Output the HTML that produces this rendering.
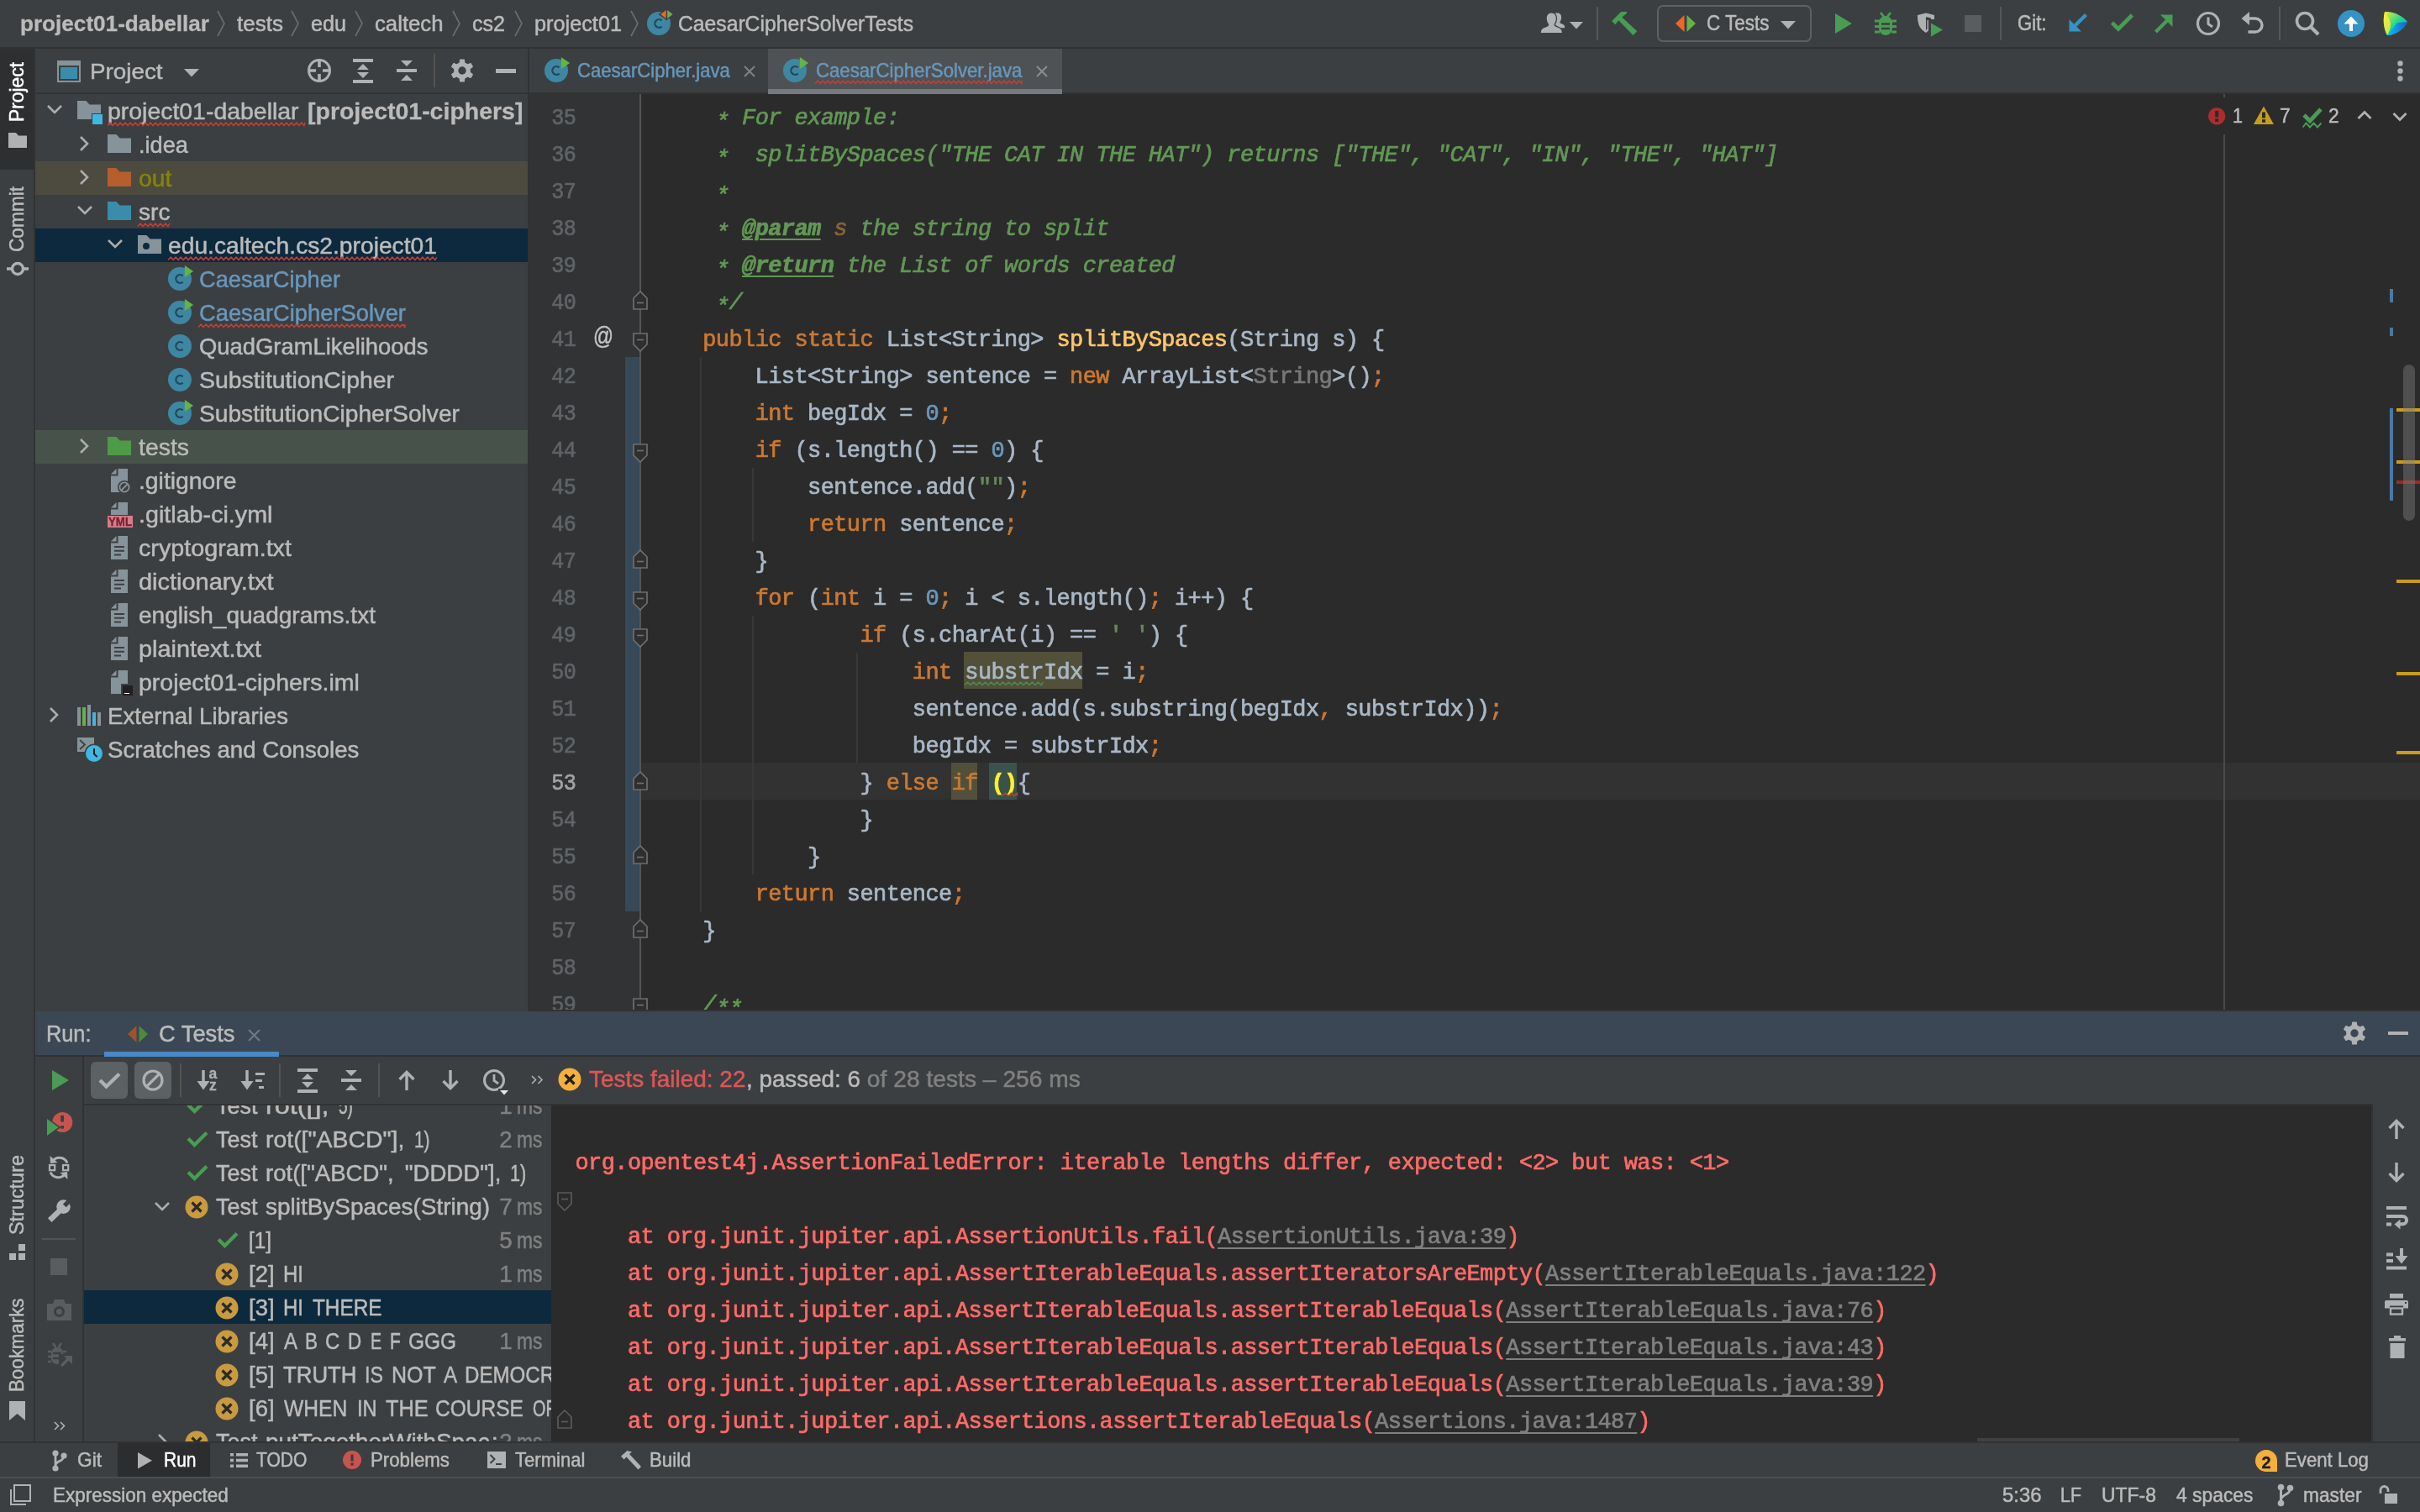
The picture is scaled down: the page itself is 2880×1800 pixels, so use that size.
<!DOCTYPE html>
<html><head><meta charset="utf-8"><title>IDE</title>
<style>html,body{margin:0;padding:0}body{transform:translateZ(0);will-change:transform;width:2880px;height:1800px;position:relative;overflow:hidden;background:#3c3f41;font-family:"Liberation Sans",sans-serif}svg{overflow:visible;display:block}</style></head>
<body>
<div style="position:absolute;left:0px;top:0px;width:2880px;height:56px;background:#3c3f41;"></div>
<div style="position:absolute;left:0px;top:56px;width:2880px;height:2px;background:#323232;"></div>
<div style="position:absolute;top:16.11px;font-family:'Liberation Sans',sans-serif;font-size:25.5px;line-height:25.5px;color:#bbbbbb;white-space:pre;left:24.00px;font-weight:bold;-webkit-text-stroke:0.3px;transform:scaleX(1.0243);transform-origin:0 0;">project01-dabellar</div>
<svg style="position:absolute;left:257px;top:12px;" width="12" height="32" viewBox="0 0 12 32"><polyline points="2,1 10,16 2,31" fill="none" stroke="#6b6e70" stroke-width="1.6"/></svg>
<div style="position:absolute;top:16.11px;font-family:'Liberation Sans',sans-serif;font-size:25.5px;line-height:25.5px;color:#bbbbbb;white-space:pre;left:282.00px;-webkit-text-stroke:0.5px;transform:scaleX(1.0213);transform-origin:0 0;">tests</div>
<svg style="position:absolute;left:345px;top:12px;" width="12" height="32" viewBox="0 0 12 32"><polyline points="2,1 10,16 2,31" fill="none" stroke="#6b6e70" stroke-width="1.6"/></svg>
<div style="position:absolute;top:16.11px;font-family:'Liberation Sans',sans-serif;font-size:25.5px;line-height:25.5px;color:#bbbbbb;white-space:pre;left:370.00px;-webkit-text-stroke:0.5px;transform:scaleX(0.9871);transform-origin:0 0;">edu</div>
<svg style="position:absolute;left:421px;top:12px;" width="12" height="32" viewBox="0 0 12 32"><polyline points="2,1 10,16 2,31" fill="none" stroke="#6b6e70" stroke-width="1.6"/></svg>
<div style="position:absolute;top:16.11px;font-family:'Liberation Sans',sans-serif;font-size:25.5px;line-height:25.5px;color:#bbbbbb;white-space:pre;left:446.00px;-webkit-text-stroke:0.5px;transform:scaleX(1.0087);transform-origin:0 0;">caltech</div>
<svg style="position:absolute;left:537px;top:12px;" width="12" height="32" viewBox="0 0 12 32"><polyline points="2,1 10,16 2,31" fill="none" stroke="#6b6e70" stroke-width="1.6"/></svg>
<div style="position:absolute;top:16.11px;font-family:'Liberation Sans',sans-serif;font-size:25.5px;line-height:25.5px;color:#bbbbbb;white-space:pre;left:562.00px;-webkit-text-stroke:0.5px;transform:scaleX(0.9828);transform-origin:0 0;">cs2</div>
<svg style="position:absolute;left:611px;top:12px;" width="12" height="32" viewBox="0 0 12 32"><polyline points="2,1 10,16 2,31" fill="none" stroke="#6b6e70" stroke-width="1.6"/></svg>
<div style="position:absolute;top:16.11px;font-family:'Liberation Sans',sans-serif;font-size:25.5px;line-height:25.5px;color:#bbbbbb;white-space:pre;left:636.00px;-webkit-text-stroke:0.5px;transform:scaleX(0.9914);transform-origin:0 0;">project01</div>
<svg style="position:absolute;left:749px;top:12px;" width="12" height="32" viewBox="0 0 12 32"><polyline points="2,1 10,16 2,31" fill="none" stroke="#6b6e70" stroke-width="1.6"/></svg>
<svg style="position:absolute;left:766px;top:8px;" width="38" height="38" viewBox="-2 -4 38 38"><circle cx="16" cy="16" r="14" fill="#3e87a3"/><path d="M19.6,12.4 A4.9,4.9 0 1 0 19.6,19.6" fill="none" stroke="#23475b" stroke-width="2.3"/><path d="M26,-2.500 V12.500 L15.500,5 Z" fill="#3c3f41"/><path d="M24.500,-2.500 V12.500 L35,5 Z" fill="#3c3f41"/><path d="M24.600,0 V10 L18.200,5 Z" fill="#f26522"/><path d="M26.200,0 V10 L32.600,5 Z" fill="#62b543"/></svg>
<div style="position:absolute;top:16.11px;font-family:'Liberation Sans',sans-serif;font-size:25.5px;line-height:25.5px;color:#bbbbbb;white-space:pre;left:806.50px;-webkit-text-stroke:0.5px;transform:scaleX(0.9684);transform-origin:0 0;">CaesarCipherSolverTests</div>
<svg style="position:absolute;left:1833px;top:15px;" width="30" height="25" viewBox="0 0 30 25"><path d="M20.500,0.600 C24,0.600 25.300,3.200 25.100,6.400 C24.900,8.800 24.200,10 23.400,10.800 C23.200,12.200 24,12.900 26,13.600 C28.600,14.600 29.200,15.800 29.200,18.200 H16 V1.500 C17,0.900 18.500,0.600 20.500,0.600 Z" fill="#afb1b3"/><path d="M13.3,0.6 C17.2,0.6 19,3.6 18.8,7.6 C18.6,10.6 17.6,12.4 16.6,13.4 C16.2,15.6 17.4,16.4 20.2,17.4 C24.4,18.8 25.8,20.2 25.8,24.1 H0.9 C0.9,20.200 2.300,18.800 6.500,17.400 C9.300,16.400 10.500,15.600 10,13.400 C9,12.400 8,10.600 7.800,7.600 C7.600,3.600 9.400,0.600 13.300,0.600 Z" fill="#afb1b3" stroke="#3c3f41" stroke-width="2.600"/><path d="M13.3,0.6 C17.2,0.6 19,3.6 18.8,7.6 C18.6,10.6 17.6,12.4 16.6,13.4 C16.2,15.6 17.4,16.4 20.2,17.4 C24.4,18.8 25.8,20.2 25.8,24.1 H0.9 C0.9,20.200 2.300,18.800 6.500,17.400 C9.300,16.400 10.500,15.600 10,13.400 C9,12.400 8,10.600 7.800,7.600 C7.600,3.600 9.400,0.600 13.300,0.600 Z" fill="#afb1b3"/></svg>
<svg style="position:absolute;left:1868px;top:25.5px;" width="16" height="8.5" viewBox="0 0 16 8.5"><path d="M0,0 H16 L8.0,8.5 Z" fill="#afb1b3"/></svg>
<div style="position:absolute;left:1900px;top:8px;width:2px;height:40px;background:#555759;"></div>
<svg style="position:absolute;left:1918px;top:13px;" width="32" height="30" viewBox="0 0 32 30"><path d="M11.2,1.1 L18,1.1 L18,2.7 L12.3,7.6 L30.3,24.2 L25.5,29 L8.3,11.3 L4.2,16.2 L0.2,12.1 Z" fill="#499c54"/></svg>
<div style="position:absolute;left:1972px;top:6px;width:180px;height:40px;border:2px solid #5e6163;border-radius:7px;"></div>
<svg style="position:absolute;left:1994px;top:18px;" width="24" height="20" viewBox="0 0 24 20"><path d="M10.5,0 V20 L0,10 Z" fill="#f26522"/><path d="M13.5,0 V20 L24,10 Z" fill="#62b543"/></svg>
<div style="position:absolute;top:15.41px;font-family:'Liberation Sans',sans-serif;font-size:25.5px;line-height:25.5px;color:#bbbbbb;white-space:pre;left:2030.50px;-webkit-text-stroke:0.5px;transform:scaleX(0.8811);transform-origin:0 0;">C Tests</div>
<svg style="position:absolute;left:2119px;top:24.5px;" width="18" height="9.5" viewBox="0 0 18 9.5"><path d="M0,0 H18 L9.0,9.5 Z" fill="#afb1b3"/></svg>
<svg style="position:absolute;left:2184px;top:16px;" width="20" height="24" viewBox="0 0 20 24"><path d="M0,0 L20,12.0 L0,24 Z" fill="#499c54"/></svg>
<svg style="position:absolute;left:2230px;top:13px;" width="28" height="30" viewBox="0 0 28 30"><path d="M14,6 c5,0 8,4 8,9 v5 c0,5 -3.500,9 -8,9 c-4.500,0 -8,-4 -8,-9 v-5 c0,-5 3,-9 8,-9 z" fill="#499c54"/><path d="M8,2 L12,7 M20,2 L16,7 M1,12 H7 M21,12 H27 M1,18.500 H7 M21,18.500 H27 M1,25 H7 M21,25 H27" stroke="#499c54" stroke-width="2.800"/><path d="M9,15.500 H19 M9,21 H19" stroke="#3c3f41" stroke-width="2.600"/></svg>
<svg style="position:absolute;left:2281px;top:15px;" width="32" height="30" viewBox="0 0 32 30"><path d="M1,3 L11,0.500 L21,3 V8 H14 V21.500 L11,24 C4,20 1,14 1,3 Z" fill="#afb1b3"/><path d="M11,5 L17,6.500 V9 H12.500 V19.500 L11,21 Z" fill="#3c3f41"/><path d="M17,12.500 L31,20.500 L17,28.500 Z" fill="#499c54"/></svg>
<div style="position:absolute;left:2338px;top:18px;width:20px;height:20px;background:#5a5d5f;"></div>
<div style="position:absolute;left:2380px;top:8px;width:2px;height:40px;background:#555759;"></div>
<div style="position:absolute;top:15.41px;font-family:'Liberation Sans',sans-serif;font-size:25.5px;line-height:25.5px;color:#bbbbbb;white-space:pre;left:2400.50px;-webkit-text-stroke:0.5px;transform:scaleX(0.8697);transform-origin:0 0;">Git:</div>
<svg style="position:absolute;left:2461px;top:15px;" width="24" height="24" viewBox="0 0 24 24"><path d="M21.500,2.500 L6,18" stroke="#3592c4" stroke-width="4.200"/><path d="M1.500,8 V22.500 H16 Z" fill="#3592c4"/></svg>
<svg style="position:absolute;left:2511px;top:15px;" width="30" height="24" viewBox="0 0 30 24"><polyline points="2.500,12 10,19.500 26.500,3" fill="none" stroke="#499c54" stroke-width="4.600"/></svg>
<svg style="position:absolute;left:2563px;top:16px;" width="24" height="24" viewBox="0 0 24 24"><path d="M2.500,22 L18,6.500" stroke="#499c54" stroke-width="4.200"/><path d="M8,1.500 H22.500 V16 Z" fill="#499c54"/></svg>
<svg style="position:absolute;left:2613px;top:13px;" width="30" height="30" viewBox="0 0 30 30"><circle cx="15" cy="15" r="12.500" fill="none" stroke="#afb1b3" stroke-width="3.200"/><path d="M15,7.500 V15.500 L20,19" fill="none" stroke="#afb1b3" stroke-width="3"/></svg>
<svg style="position:absolute;left:2667px;top:13px;" width="28" height="28" viewBox="0 0 28 28"><path d="M7,9 H17 a8,8 0 0 1 0,16 H8.500" fill="none" stroke="#afb1b3" stroke-width="3.400"/><path d="M0.500,9 L10,1 V17 Z" fill="#afb1b3"/></svg>
<div style="position:absolute;left:2712px;top:8px;width:2px;height:40px;background:#555759;"></div>
<svg style="position:absolute;left:2731px;top:13px;" width="30" height="30" viewBox="0 0 30 30"><circle cx="12" cy="12" r="9.500" fill="none" stroke="#afb1b3" stroke-width="3.600"/><path d="M18.500,18.500 L28,28" stroke="#afb1b3" stroke-width="4.200"/></svg>
<svg style="position:absolute;left:2782px;top:12px;" width="32" height="32" viewBox="0 0 32 32"><circle cx="16" cy="16" r="16" fill="#3592c4"/><path d="M16,25 V11" stroke="#fff" stroke-width="4"/><path d="M7.500,16.500 L16,7.500 L24.500,16.500 Z" fill="#fff"/></svg>
<svg style="position:absolute;left:2836px;top:13px;" width="30" height="30" viewBox="0 0 30 30"><defs><linearGradient id="lg1" x1="0" y1="0" x2="1" y2="1"><stop offset="0" stop-color="#fdee21"/><stop offset="0.500" stop-color="#22d88f"/><stop offset="1" stop-color="#009ae5"/></linearGradient><linearGradient id="lg2" x1="0" y1="0" x2="1" y2="0"><stop offset="0" stop-color="#07c3f2"/><stop offset="1" stop-color="#1a5fd0"/></linearGradient></defs><path d="M2,1 C12,0 24,6 29,13 C25,22 14,29 5,29 C0,20 0,9 2,1 Z" fill="url(#lg1)"/><path d="M29,13 C25,22 14,29 5,29 L17,14 Z" fill="url(#lg2)"/><path d="M2,1 C6,6 9,12 9,16 C9,21 7,25 5,29 C0,20 0,9 2,1 Z" fill="#f5ec3d" opacity="0.850"/></svg>
<div style="position:absolute;left:0px;top:58px;width:40px;height:1660px;background:#3c3f41;"></div>
<div style="position:absolute;left:40px;top:58px;width:2px;height:1660px;background:#323232;"></div>
<div style="position:absolute;left:0px;top:58px;width:40px;height:144px;background:#2d2f30;"></div>
<div style="position:absolute;left:9.34px;top:144.5px;width:0;height:0;"><div style="position:absolute;left:0;top:0;transform-origin:0 0;transform:rotate(-90deg) scaleX(0.9625);font-family:'Liberation Sans',sans-serif;font-size:23.7px;line-height:23.7px;white-space:pre;color:#ffffff;-webkit-text-stroke:0.5px">Project</div></div>
<svg style="position:absolute;left:10px;top:158px;" width="22" height="18" viewBox="0 0 22 18"><path d="M0,0 H9 L12,3.500 H22 V18 H0 Z" fill="#afb1b3"/></svg>
<div style="position:absolute;left:9.34px;top:299.5px;width:0;height:0;"><div style="position:absolute;left:0;top:0;transform-origin:0 0;transform:rotate(-90deg) scaleX(0.9555);font-family:'Liberation Sans',sans-serif;font-size:23.7px;line-height:23.7px;white-space:pre;color:#bbbbbb;-webkit-text-stroke:0.5px">Commit</div></div>
<svg style="position:absolute;left:8px;top:309px;" width="26" height="22" viewBox="0 0 26 22"><circle cx="13" cy="11" r="6.500" fill="none" stroke="#afb1b3" stroke-width="3.400"/><path d="M0,11 H6 M20,11 H26" stroke="#afb1b3" stroke-width="3.400"/></svg>
<div style="position:absolute;left:9.34px;top:1469.5px;width:0;height:0;"><div style="position:absolute;left:0;top:0;transform-origin:0 0;transform:rotate(-90deg) scaleX(0.9880);font-family:'Liberation Sans',sans-serif;font-size:23.7px;line-height:23.7px;white-space:pre;color:#bbbbbb;-webkit-text-stroke:0.5px">Structure</div></div>
<svg style="position:absolute;left:11px;top:1481px;" width="20" height="20" viewBox="0 0 20 20"><path d="M11,0 H19 V8 H11 Z M0,11 H8 V19 H0 Z M11,11 H19 V19 H11 Z" fill="#afb1b3"/></svg>
<div style="position:absolute;left:9.34px;top:1657px;width:0;height:0;"><div style="position:absolute;left:0;top:0;transform-origin:0 0;transform:rotate(-90deg) scaleX(0.9406);font-family:'Liberation Sans',sans-serif;font-size:23.7px;line-height:23.7px;white-space:pre;color:#bbbbbb;-webkit-text-stroke:0.5px">Bookmarks</div></div>
<svg style="position:absolute;left:11px;top:1668px;" width="19" height="23" viewBox="0 0 19 23"><path d="M0,0 H19 V23 L9.500,15 L0,23 Z" fill="#afb1b3"/></svg>
<div style="position:absolute;left:42px;top:58px;width:586px;height:1144px;background:#3c3f41;"></div>
<div style="position:absolute;left:628px;top:58px;width:2px;height:1146px;background:#323232;"></div>
<div style="position:absolute;left:42px;top:110px;width:586px;height:2px;background:#323232;"></div>
<svg style="position:absolute;left:68px;top:72px;" width="28" height="26" viewBox="0 0 28 26"><rect x="0" y="0" width="28" height="26" fill="#87939a"/><rect x="2" y="6" width="24" height="18" fill="#3c3f41"/><rect x="4" y="8" width="20" height="14" fill="#3a8cab"/></svg>
<div style="position:absolute;top:71.79px;font-family:'Liberation Sans',sans-serif;font-size:26px;line-height:26px;color:#bbbbbb;white-space:pre;left:106.50px;-webkit-text-stroke:0.5px;transform:scaleX(1.0689);transform-origin:0 0;">Project</div>
<svg style="position:absolute;left:219px;top:82px;" width="18" height="9.5" viewBox="0 0 18 9.5"><path d="M0,0 H18 L9.0,9.5 Z" fill="#afb1b3"/></svg>
<svg style="position:absolute;left:365px;top:69px;" width="30" height="30" viewBox="0 0 30 30"><circle cx="15" cy="15" r="12.500" fill="none" stroke="#afb1b3" stroke-width="3"/><path d="M15,2 V11 M15,19 V28 M2,15 H11 M19,15 H28" stroke="#afb1b3" stroke-width="3.600"/></svg>
<svg style="position:absolute;left:420px;top:70px;" width="24" height="29" viewBox="0 0 24 29"><path d="M0,0 H24 V4 H0 Z M0,25 H24 V29 H0 Z M12,6 L19,13 H5 Z M12,23 L19,16 H5 Z" fill="#afb1b3"/></svg>
<svg style="position:absolute;left:472px;top:71px;" width="24" height="26" viewBox="0 0 24 26"><path d="M0,11 H24 V15 H0 Z M12,8 L19,1 H5 Z M12,18 L19,25 H5 Z" fill="#afb1b3"/></svg>
<div style="position:absolute;left:516px;top:64px;width:2px;height:40px;background:#55534f;"></div>
<svg style="position:absolute;left:536px;top:70px;" width="28" height="28" viewBox="0 0 28 28"><polygon points="11.83,1.18 16.17,1.18 16.61,5.01 20.48,7.24 24.02,5.71 26.18,9.47 23.09,11.77 23.09,16.23 26.18,18.53 24.02,22.29 20.48,20.76 16.61,22.99 16.17,26.82 11.83,26.82 11.39,22.99 7.52,20.76 3.98,22.29 1.82,18.53 4.91,16.23 4.91,11.77 1.82,9.47 3.98,5.71 7.52,7.24 11.39,5.01" fill="#afb1b3" stroke="#afb1b3" stroke-width="1.5" stroke-linejoin="round"/><circle cx="14" cy="14" r="4.68" fill="#3c3f41"/></svg>
<div style="position:absolute;left:590px;top:82px;width:24px;height:4.5px;background:#afb1b3;"></div>
<div style="position:absolute;left:42px;top:192px;width:586px;height:40px;background:#4d4a40;"></div>
<div style="position:absolute;left:42px;top:272px;width:586px;height:40px;background:#0d293e;"></div>
<div style="position:absolute;left:42px;top:512px;width:586px;height:40px;background:#47524a;"></div>
<svg style="position:absolute;left:54px;top:122.19999999999999px;" width="22" height="16" viewBox="0 0 22 16"><polyline points="3,4 11,12 19,4" fill="none" stroke="#adadad" stroke-width="2.6"/></svg>
<svg style="position:absolute;left:92px;top:120px;" width="28" height="22" viewBox="0 0 28 22"><path d="M0,0 H10.5 L14.5,4.5 H28 V22 H0 Z" fill="#87939a"/></svg>
<div style="position:absolute;left:109px;top:135px;width:14px;height:14px;background:#3c3f41;"></div>
<div style="position:absolute;left:110px;top:136px;width:12px;height:12px;background:#40b6e0;"></div>
<div style="position:absolute;top:118.84px;font-family:'Liberation Sans',sans-serif;font-size:27.6px;line-height:27.6px;color:#bbbbbb;white-space:pre;left:128.00px;-webkit-text-stroke:0.5px;transform:scaleX(1.0301);transform-origin:0 0;">project01-dabellar </div>
<div style="position:absolute;top:118.84px;font-family:'Liberation Sans',sans-serif;font-size:27.6px;line-height:27.6px;color:#bbbbbb;white-space:pre;left:365.50px;font-weight:bold;-webkit-text-stroke:0.3px;transform:scaleX(1.0323);transform-origin:0 0;">[project01-ciphers]</div>
<svg style="position:absolute;left:128px;top:145.0px;" width="235" height="5.6" viewBox="0 0 235 5.6"><polyline points="0.0,4.6 3.0,1.0 6.0,4.6 9.0,1.0 12.0,4.6 15.0,1.0 18.0,4.6 21.0,1.0 24.0,4.6 27.0,1.0 30.0,4.6 33.0,1.0 36.0,4.6 39.0,1.0 42.0,4.6 45.0,1.0 48.0,4.6 51.0,1.0 54.0,4.6 57.0,1.0 60.0,4.6 63.0,1.0 66.0,4.6 69.0,1.0 72.0,4.6 75.0,1.0 78.0,4.6 81.0,1.0 84.0,4.6 87.0,1.0 90.0,4.6 93.0,1.0 96.0,4.6 99.0,1.0 102.0,4.6 105.0,1.0 108.0,4.6 111.0,1.0 114.0,4.6 117.0,1.0 120.0,4.6 123.0,1.0 126.0,4.6 129.0,1.0 132.0,4.6 135.0,1.0 138.0,4.6 141.0,1.0 144.0,4.6 147.0,1.0 150.0,4.6 153.0,1.0 156.0,4.6 159.0,1.0 162.0,4.6 165.0,1.0 168.0,4.6 171.0,1.0 174.0,4.6 177.0,1.0 180.0,4.6 183.0,1.0 186.0,4.6 189.0,1.0 192.0,4.6 195.0,1.0 198.0,4.6 201.0,1.0 204.0,4.6 207.0,1.0 210.0,4.6 213.0,1.0 216.0,4.6 219.0,1.0 222.0,4.6 225.0,1.0 228.0,4.6 231.0,1.0 234.0,4.6 235.0,1.0" fill="none" stroke="#c43e38" stroke-width="1.5" stroke-linejoin="round"/></svg>
<svg style="position:absolute;left:92px;top:159.8px;" width="16" height="22" viewBox="0 0 16 22"><polyline points="4,3 12,11 4,19" fill="none" stroke="#adadad" stroke-width="2.6"/></svg>
<svg style="position:absolute;left:128px;top:160px;" width="28" height="22" viewBox="0 0 28 22"><path d="M0,0 H10.5 L14.5,4.5 H28 V22 H0 Z" fill="#87939a"/></svg>
<div style="position:absolute;top:158.84px;font-family:'Liberation Sans',sans-serif;font-size:27.6px;line-height:27.6px;color:#bbbbbb;white-space:pre;left:164.50px;-webkit-text-stroke:0.5px;transform:scaleX(0.9858);transform-origin:0 0;">.idea</div>
<svg style="position:absolute;left:92px;top:199.8px;" width="16" height="22" viewBox="0 0 16 22"><polyline points="4,3 12,11 4,19" fill="none" stroke="#adadad" stroke-width="2.6"/></svg>
<svg style="position:absolute;left:128px;top:200px;" width="28" height="22" viewBox="0 0 28 22"><path d="M0,0 H10.5 L14.5,4.5 H28 V22 H0 Z" fill="#b55e2e"/></svg>
<div style="position:absolute;top:198.84px;font-family:'Liberation Sans',sans-serif;font-size:27.6px;line-height:27.6px;color:#848504;white-space:pre;left:164.50px;-webkit-text-stroke:0.5px;transform:scaleX(1.0295);transform-origin:0 0;">out</div>
<svg style="position:absolute;left:90px;top:242.2px;" width="22" height="16" viewBox="0 0 22 16"><polyline points="3,4 11,12 19,4" fill="none" stroke="#adadad" stroke-width="2.6"/></svg>
<svg style="position:absolute;left:128px;top:240px;" width="28" height="22" viewBox="0 0 28 22"><path d="M0,0 H10.5 L14.5,4.5 H28 V22 H0 Z" fill="#3a8cab"/></svg>
<div style="position:absolute;top:238.84px;font-family:'Liberation Sans',sans-serif;font-size:27.6px;line-height:27.6px;color:#bbbbbb;white-space:pre;left:164.50px;-webkit-text-stroke:0.5px;transform:scaleX(1.0192);transform-origin:0 0;">src</div>
<svg style="position:absolute;left:164px;top:265.0px;" width="38" height="5.6" viewBox="0 0 38 5.6"><polyline points="0.0,4.6 3.0,1.0 6.0,4.6 9.0,1.0 12.0,4.6 15.0,1.0 18.0,4.6 21.0,1.0 24.0,4.6 27.0,1.0 30.0,4.6 33.0,1.0 36.0,4.6 38.0,1.0" fill="none" stroke="#c43e38" stroke-width="1.5" stroke-linejoin="round"/></svg>
<svg style="position:absolute;left:126px;top:282.2px;" width="22" height="16" viewBox="0 0 22 16"><polyline points="3,4 11,12 19,4" fill="none" stroke="#adadad" stroke-width="2.6"/></svg>
<svg style="position:absolute;left:164px;top:280px;" width="28" height="22" viewBox="0 0 28 22"><path d="M0,0 H10.5 L14.5,4.5 H28 V22 H0 Z" fill="#87939a"/></svg>
<svg style="position:absolute;left:169px;top:288px;" width="10" height="10" viewBox="0 0 10 10"><circle cx="5" cy="5" r="4" fill="#0d293e"/></svg>
<div style="position:absolute;top:278.84px;font-family:'Liberation Sans',sans-serif;font-size:27.6px;line-height:27.6px;color:#bbbbbb;white-space:pre;left:200.00px;-webkit-text-stroke:0.5px;transform:scaleX(1.0224);transform-origin:0 0;">edu.caltech.cs2.project01</div>
<svg style="position:absolute;left:200px;top:305.0px;" width="320" height="5.6" viewBox="0 0 320 5.6"><polyline points="0.0,4.6 3.0,1.0 6.0,4.6 9.0,1.0 12.0,4.6 15.0,1.0 18.0,4.6 21.0,1.0 24.0,4.6 27.0,1.0 30.0,4.6 33.0,1.0 36.0,4.6 39.0,1.0 42.0,4.6 45.0,1.0 48.0,4.6 51.0,1.0 54.0,4.6 57.0,1.0 60.0,4.6 63.0,1.0 66.0,4.6 69.0,1.0 72.0,4.6 75.0,1.0 78.0,4.6 81.0,1.0 84.0,4.6 87.0,1.0 90.0,4.6 93.0,1.0 96.0,4.6 99.0,1.0 102.0,4.6 105.0,1.0 108.0,4.6 111.0,1.0 114.0,4.6 117.0,1.0 120.0,4.6 123.0,1.0 126.0,4.6 129.0,1.0 132.0,4.6 135.0,1.0 138.0,4.6 141.0,1.0 144.0,4.6 147.0,1.0 150.0,4.6 153.0,1.0 156.0,4.6 159.0,1.0 162.0,4.6 165.0,1.0 168.0,4.6 171.0,1.0 174.0,4.6 177.0,1.0 180.0,4.6 183.0,1.0 186.0,4.6 189.0,1.0 192.0,4.6 195.0,1.0 198.0,4.6 201.0,1.0 204.0,4.6 207.0,1.0 210.0,4.6 213.0,1.0 216.0,4.6 219.0,1.0 222.0,4.6 225.0,1.0 228.0,4.6 231.0,1.0 234.0,4.6 237.0,1.0 240.0,4.6 243.0,1.0 246.0,4.6 249.0,1.0 252.0,4.6 255.0,1.0 258.0,4.6 261.0,1.0 264.0,4.6 267.0,1.0 270.0,4.6 273.0,1.0 276.0,4.6 279.0,1.0 282.0,4.6 285.0,1.0 288.0,4.6 291.0,1.0 294.0,4.6 297.0,1.0 300.0,4.6 303.0,1.0 306.0,4.6 309.0,1.0 312.0,4.6 315.0,1.0 318.0,4.6 320.0,1.0" fill="none" stroke="#c43e38" stroke-width="1.5" stroke-linejoin="round"/></svg>
<svg style="position:absolute;left:196px;top:312px;" width="38" height="38" viewBox="-2 -4 38 38"><circle cx="16" cy="16" r="14" fill="#3e87a3"/><path d="M19.6,12.4 A4.9,4.9 0 1 0 19.6,19.6" fill="none" stroke="#23475b" stroke-width="2.3"/><path d="M21.8,-0.1 L32.1,7 L21.8,13.9 Z" fill="#62b543"/></svg>
<div style="position:absolute;top:318.84px;font-family:'Liberation Sans',sans-serif;font-size:27.6px;line-height:27.6px;color:#6897bb;white-space:pre;left:236.50px;-webkit-text-stroke:0.5px;transform:scaleX(0.9866);transform-origin:0 0;">CaesarCipher</div>
<svg style="position:absolute;left:196px;top:352px;" width="38" height="38" viewBox="-2 -4 38 38"><circle cx="16" cy="16" r="14" fill="#3e87a3"/><path d="M19.6,12.4 A4.9,4.9 0 1 0 19.6,19.6" fill="none" stroke="#23475b" stroke-width="2.3"/><path d="M21.8,-0.1 L32.1,7 L21.8,13.9 Z" fill="#62b543"/></svg>
<div style="position:absolute;top:358.84px;font-family:'Liberation Sans',sans-serif;font-size:27.6px;line-height:27.6px;color:#6897bb;white-space:pre;left:236.50px;-webkit-text-stroke:0.5px;transform:scaleX(0.9899);transform-origin:0 0;">CaesarCipherSolver</div>
<svg style="position:absolute;left:236px;top:385.0px;" width="246" height="5.6" viewBox="0 0 246 5.6"><polyline points="0.0,4.6 3.0,1.0 6.0,4.6 9.0,1.0 12.0,4.6 15.0,1.0 18.0,4.6 21.0,1.0 24.0,4.6 27.0,1.0 30.0,4.6 33.0,1.0 36.0,4.6 39.0,1.0 42.0,4.6 45.0,1.0 48.0,4.6 51.0,1.0 54.0,4.6 57.0,1.0 60.0,4.6 63.0,1.0 66.0,4.6 69.0,1.0 72.0,4.6 75.0,1.0 78.0,4.6 81.0,1.0 84.0,4.6 87.0,1.0 90.0,4.6 93.0,1.0 96.0,4.6 99.0,1.0 102.0,4.6 105.0,1.0 108.0,4.6 111.0,1.0 114.0,4.6 117.0,1.0 120.0,4.6 123.0,1.0 126.0,4.6 129.0,1.0 132.0,4.6 135.0,1.0 138.0,4.6 141.0,1.0 144.0,4.6 147.0,1.0 150.0,4.6 153.0,1.0 156.0,4.6 159.0,1.0 162.0,4.6 165.0,1.0 168.0,4.6 171.0,1.0 174.0,4.6 177.0,1.0 180.0,4.6 183.0,1.0 186.0,4.6 189.0,1.0 192.0,4.6 195.0,1.0 198.0,4.6 201.0,1.0 204.0,4.6 207.0,1.0 210.0,4.6 213.0,1.0 216.0,4.6 219.0,1.0 222.0,4.6 225.0,1.0 228.0,4.6 231.0,1.0 234.0,4.6 237.0,1.0 240.0,4.6 243.0,1.0 246.0,4.6 246.0,1.0" fill="none" stroke="#c43e38" stroke-width="1.5" stroke-linejoin="round"/></svg>
<svg style="position:absolute;left:196px;top:392px;" width="38" height="38" viewBox="-2 -4 38 38"><circle cx="16" cy="16" r="14" fill="#3e87a3"/><path d="M19.6,12.4 A4.9,4.9 0 1 0 19.6,19.6" fill="none" stroke="#23475b" stroke-width="2.3"/></svg>
<div style="position:absolute;top:398.84px;font-family:'Liberation Sans',sans-serif;font-size:27.6px;line-height:27.6px;color:#bbbbbb;white-space:pre;left:236.50px;-webkit-text-stroke:0.5px;transform:scaleX(0.9923);transform-origin:0 0;">QuadGramLikelihoods</div>
<svg style="position:absolute;left:196px;top:432px;" width="38" height="38" viewBox="-2 -4 38 38"><circle cx="16" cy="16" r="14" fill="#3e87a3"/><path d="M19.6,12.4 A4.9,4.9 0 1 0 19.6,19.6" fill="none" stroke="#23475b" stroke-width="2.3"/></svg>
<div style="position:absolute;top:438.84px;font-family:'Liberation Sans',sans-serif;font-size:27.6px;line-height:27.6px;color:#bbbbbb;white-space:pre;left:236.50px;-webkit-text-stroke:0.5px;transform:scaleX(1.0287);transform-origin:0 0;">SubstitutionCipher</div>
<svg style="position:absolute;left:196px;top:472px;" width="38" height="38" viewBox="-2 -4 38 38"><circle cx="16" cy="16" r="14" fill="#3e87a3"/><path d="M19.6,12.4 A4.9,4.9 0 1 0 19.6,19.6" fill="none" stroke="#23475b" stroke-width="2.3"/><path d="M21.8,-0.1 L32.1,7 L21.8,13.9 Z" fill="#62b543"/></svg>
<div style="position:absolute;top:478.84px;font-family:'Liberation Sans',sans-serif;font-size:27.6px;line-height:27.6px;color:#bbbbbb;white-space:pre;left:236.50px;-webkit-text-stroke:0.5px;transform:scaleX(1.0205);transform-origin:0 0;">SubstitutionCipherSolver</div>
<svg style="position:absolute;left:92px;top:519.8px;" width="16" height="22" viewBox="0 0 16 22"><polyline points="4,3 12,11 4,19" fill="none" stroke="#adadad" stroke-width="2.6"/></svg>
<svg style="position:absolute;left:128px;top:520px;" width="28" height="22" viewBox="0 0 28 22"><path d="M0,0 H10.5 L14.5,4.5 H28 V22 H0 Z" fill="#4f9a46"/></svg>
<div style="position:absolute;top:518.84px;font-family:'Liberation Sans',sans-serif;font-size:27.6px;line-height:27.6px;color:#bbbbbb;white-space:pre;left:164.50px;-webkit-text-stroke:0.5px;transform:scaleX(1.0294);transform-origin:0 0;">tests</div>
<svg style="position:absolute;left:132px;top:558px;" width="20" height="28" viewBox="0 0 20 28"><path d="M8.5,0 H20 V28 H0 V8.5 H8.5 Z" fill="#87939a"/><path d="M6.5,0 V6.5 H0 Z" fill="#87939a"/></svg>
<svg style="position:absolute;left:140px;top:572px;" width="16" height="16" viewBox="0 0 16 16"><circle cx="8" cy="8" r="8" fill="#3c3f41"/><circle cx="8" cy="8" r="5.600" fill="none" stroke="#87939a" stroke-width="1.800"/><path d="M4,12 L12,4" stroke="#87939a" stroke-width="1.800"/></svg>
<div style="position:absolute;top:558.84px;font-family:'Liberation Sans',sans-serif;font-size:27.6px;line-height:27.6px;color:#bbbbbb;white-space:pre;left:164.50px;-webkit-text-stroke:0.5px;transform:scaleX(1.0260);transform-origin:0 0;">.gitignore</div>
<svg style="position:absolute;left:132px;top:598px;" width="20" height="28" viewBox="0 0 20 28"><path d="M8.5,0 H20 V28 H0 V8.5 H8.5 Z" fill="#87939a"/><path d="M6.5,0 V6.5 H0 Z" fill="#87939a"/></svg>
<div style="position:absolute;left:126px;top:613px;width:34px;height:16px;background:#3c3f41;"></div>
<div style="position:absolute;left:128px;top:614px;width:30px;height:14px;background:#d47d8c;"></div>
<div style="position:absolute;top:614.23px;font-family:'Liberation Sans',sans-serif;font-size:14.5px;line-height:14.5px;color:#7a1f2e;white-space:pre;left:129.00px;font-weight:bold;-webkit-text-stroke:0.3px;transform:scaleX(0.9148);transform-origin:0 0;">YML</div>
<div style="position:absolute;top:598.84px;font-family:'Liberation Sans',sans-serif;font-size:27.6px;line-height:27.6px;color:#bbbbbb;white-space:pre;left:164.50px;-webkit-text-stroke:0.5px;transform:scaleX(1.0400);transform-origin:0 0;">.gitlab-ci.yml</div>
<svg style="position:absolute;left:132px;top:638px;" width="20" height="28" viewBox="0 0 20 28"><path d="M8.5,0 H20 V28 H0 V8.5 H8.5 Z" fill="#87939a"/><path d="M6.5,0 V6.5 H0 Z" fill="#87939a"/><path d="M4,13 H16 M4,17.7 H16 M4,22.4 H12" stroke="#3c3f41" stroke-width="2"/></svg>
<div style="position:absolute;top:638.84px;font-family:'Liberation Sans',sans-serif;font-size:27.6px;line-height:27.6px;color:#bbbbbb;white-space:pre;left:164.50px;-webkit-text-stroke:0.5px;transform:scaleX(1.0409);transform-origin:0 0;">cryptogram.txt</div>
<svg style="position:absolute;left:132px;top:678px;" width="20" height="28" viewBox="0 0 20 28"><path d="M8.5,0 H20 V28 H0 V8.5 H8.5 Z" fill="#87939a"/><path d="M6.5,0 V6.5 H0 Z" fill="#87939a"/><path d="M4,13 H16 M4,17.7 H16 M4,22.4 H12" stroke="#3c3f41" stroke-width="2"/></svg>
<div style="position:absolute;top:678.84px;font-family:'Liberation Sans',sans-serif;font-size:27.6px;line-height:27.6px;color:#bbbbbb;white-space:pre;left:164.50px;-webkit-text-stroke:0.5px;transform:scaleX(1.0498);transform-origin:0 0;">dictionary.txt</div>
<svg style="position:absolute;left:132px;top:718px;" width="20" height="28" viewBox="0 0 20 28"><path d="M8.5,0 H20 V28 H0 V8.5 H8.5 Z" fill="#87939a"/><path d="M6.5,0 V6.5 H0 Z" fill="#87939a"/><path d="M4,13 H16 M4,17.7 H16 M4,22.4 H12" stroke="#3c3f41" stroke-width="2"/></svg>
<div style="position:absolute;top:718.84px;font-family:'Liberation Sans',sans-serif;font-size:27.6px;line-height:27.6px;color:#bbbbbb;white-space:pre;left:164.50px;-webkit-text-stroke:0.5px;transform:scaleX(1.0155);transform-origin:0 0;">english_quadgrams.txt</div>
<svg style="position:absolute;left:132px;top:758px;" width="20" height="28" viewBox="0 0 20 28"><path d="M8.5,0 H20 V28 H0 V8.5 H8.5 Z" fill="#87939a"/><path d="M6.5,0 V6.5 H0 Z" fill="#87939a"/><path d="M4,13 H16 M4,17.7 H16 M4,22.4 H12" stroke="#3c3f41" stroke-width="2"/></svg>
<div style="position:absolute;top:758.84px;font-family:'Liberation Sans',sans-serif;font-size:27.6px;line-height:27.6px;color:#bbbbbb;white-space:pre;left:164.50px;-webkit-text-stroke:0.5px;transform:scaleX(1.0458);transform-origin:0 0;">plaintext.txt</div>
<svg style="position:absolute;left:132px;top:798px;" width="20" height="28" viewBox="0 0 20 28"><path d="M8.5,0 H20 V28 H0 V8.5 H8.5 Z" fill="#87939a"/><path d="M6.5,0 V6.5 H0 Z" fill="#87939a"/></svg>
<div style="position:absolute;left:144px;top:814px;width:16px;height:16px;background:#3c3f41;"></div>
<div style="position:absolute;left:146px;top:816px;width:12px;height:12px;background:#231f20;"></div>
<div style="position:absolute;left:148px;top:824.5px;width:6px;height:1.8px;background:#ffffff;"></div>
<div style="position:absolute;top:798.84px;font-family:'Liberation Sans',sans-serif;font-size:27.6px;line-height:27.6px;color:#bbbbbb;white-space:pre;left:164.50px;-webkit-text-stroke:0.5px;transform:scaleX(1.0328);transform-origin:0 0;">project01-ciphers.iml</div>
<svg style="position:absolute;left:56px;top:839.8px;" width="16" height="22" viewBox="0 0 16 22"><polyline points="4,3 12,11 4,19" fill="none" stroke="#adadad" stroke-width="2.6"/></svg>
<svg style="position:absolute;left:92px;top:838px;" width="28" height="26" viewBox="0 0 28 26"><path d="M0,4 H4 V26 H0 Z M18,10 H22 V26 H18 Z M12,1 H16 V26 H12 Z" fill="#87939a"/><path d="M6,4 H10 V26 H6 Z" fill="#62b543"/><path d="M18,10 H22 V26 H18 Z" fill="#40b6e0"/><path d="M24,10 H28 V26 H24 Z" fill="#87939a"/></svg>
<div style="position:absolute;top:838.84px;font-family:'Liberation Sans',sans-serif;font-size:27.6px;line-height:27.6px;color:#bbbbbb;white-space:pre;left:128.00px;-webkit-text-stroke:0.5px;transform:scaleX(1.0011);transform-origin:0 0;">External Libraries</div>
<svg style="position:absolute;left:92px;top:878px;" width="32" height="30" viewBox="0 0 32 30"><path d="M0,0 H20 V17 H0 Z" fill="#87939a"/><path d="M3,3 L9,8.500 L3,14" fill="none" stroke="#3c3f41" stroke-width="1.800"/><circle cx="20" cy="19" r="11.500" fill="#3c3f41"/><circle cx="20" cy="19" r="10" fill="#40b6e0"/><path d="M20,13 V19.500 L23.500,23" fill="none" stroke="#231f20" stroke-width="2"/></svg>
<div style="position:absolute;top:878.84px;font-family:'Liberation Sans',sans-serif;font-size:27.6px;line-height:27.6px;color:#bbbbbb;white-space:pre;left:128.00px;-webkit-text-stroke:0.5px;transform:scaleX(1.0011);transform-origin:0 0;">Scratches and Consoles</div>
<div style="position:absolute;left:630px;top:58px;width:2250px;height:52px;background:#3c3f41;"></div>
<div style="position:absolute;left:630px;top:110px;width:2250px;height:2px;background:#323232;"></div>
<svg style="position:absolute;left:644px;top:63.5px;" width="38" height="38" viewBox="-2 -4 38 38"><circle cx="16" cy="16" r="14" fill="#3e87a3"/><path d="M19.6,12.4 A4.9,4.9 0 1 0 19.6,19.6" fill="none" stroke="#23475b" stroke-width="2.3"/><path d="M21.8,-0.1 L32.1,7 L21.8,13.9 Z" fill="#62b543"/></svg>
<div style="position:absolute;top:72.86px;font-family:'Liberation Sans',sans-serif;font-size:23.2px;line-height:23.2px;color:#6897bb;white-space:pre;left:686.50px;-webkit-text-stroke:0.5px;transform:scaleX(0.9536);transform-origin:0 0;">CaesarCipher.java</div>
<svg style="position:absolute;left:884px;top:76.5px;" width="16" height="16" viewBox="0 0 16 16"><path d="M2,2 L14,14 M14,2 L2,14" stroke="#7e8183" stroke-width="2"/></svg>
<div style="position:absolute;left:914px;top:58px;width:350px;height:52px;background:#4e5254;"></div>
<div style="position:absolute;left:914px;top:106px;width:350px;height:6px;background:#747a80;"></div>
<svg style="position:absolute;left:928px;top:63.5px;" width="38" height="38" viewBox="-2 -4 38 38"><circle cx="16" cy="16" r="14" fill="#3e87a3"/><path d="M19.6,12.4 A4.9,4.9 0 1 0 19.6,19.6" fill="none" stroke="#23475b" stroke-width="2.3"/><path d="M21.8,-0.1 L32.1,7 L21.8,13.9 Z" fill="#62b543"/></svg>
<div style="position:absolute;top:72.86px;font-family:'Liberation Sans',sans-serif;font-size:23.2px;line-height:23.2px;color:#6897bb;white-space:pre;left:970.50px;-webkit-text-stroke:0.5px;transform:scaleX(0.9566);transform-origin:0 0;">CaesarCipherSolver.java</div>
<svg style="position:absolute;left:970px;top:95.10000000000001px;" width="246" height="5.6" viewBox="0 0 246 5.6"><polyline points="0.0,4.6 3.0,1.0 6.0,4.6 9.0,1.0 12.0,4.6 15.0,1.0 18.0,4.6 21.0,1.0 24.0,4.6 27.0,1.0 30.0,4.6 33.0,1.0 36.0,4.6 39.0,1.0 42.0,4.6 45.0,1.0 48.0,4.6 51.0,1.0 54.0,4.6 57.0,1.0 60.0,4.6 63.0,1.0 66.0,4.6 69.0,1.0 72.0,4.6 75.0,1.0 78.0,4.6 81.0,1.0 84.0,4.6 87.0,1.0 90.0,4.6 93.0,1.0 96.0,4.6 99.0,1.0 102.0,4.6 105.0,1.0 108.0,4.6 111.0,1.0 114.0,4.6 117.0,1.0 120.0,4.6 123.0,1.0 126.0,4.6 129.0,1.0 132.0,4.6 135.0,1.0 138.0,4.6 141.0,1.0 144.0,4.6 147.0,1.0 150.0,4.6 153.0,1.0 156.0,4.6 159.0,1.0 162.0,4.6 165.0,1.0 168.0,4.6 171.0,1.0 174.0,4.6 177.0,1.0 180.0,4.6 183.0,1.0 186.0,4.6 189.0,1.0 192.0,4.6 195.0,1.0 198.0,4.6 201.0,1.0 204.0,4.6 207.0,1.0 210.0,4.6 213.0,1.0 216.0,4.6 219.0,1.0 222.0,4.6 225.0,1.0 228.0,4.6 231.0,1.0 234.0,4.6 237.0,1.0 240.0,4.6 243.0,1.0 246.0,4.6 246.0,1.0" fill="none" stroke="#c43e38" stroke-width="1.5" stroke-linejoin="round"/></svg>
<svg style="position:absolute;left:1232px;top:76.5px;" width="16" height="16" viewBox="0 0 16 16"><path d="M2,2 L14,14 M14,2 L2,14" stroke="#8a8d8f" stroke-width="2"/></svg>
<svg style="position:absolute;left:2852.5px;top:71.5px;" width="7" height="7" viewBox="0 0 7 7"><circle cx="3.500" cy="3.500" r="3.200" fill="#afb1b3"/></svg>
<svg style="position:absolute;left:2852.5px;top:80.5px;" width="7" height="7" viewBox="0 0 7 7"><circle cx="3.500" cy="3.500" r="3.200" fill="#afb1b3"/></svg>
<svg style="position:absolute;left:2852.5px;top:89.5px;" width="7" height="7" viewBox="0 0 7 7"><circle cx="3.500" cy="3.500" r="3.200" fill="#afb1b3"/></svg>
<div style="position:absolute;left:630px;top:112px;width:2250px;height:1090px;background:#2b2b2b;"></div>
<div style="position:absolute;left:630px;top:112px;width:132px;height:1090px;background:#313335;"></div>
<div style="position:absolute;left:762px;top:908px;width:2118px;height:44px;background:#323232;"></div>
<div style="position:absolute;left:744px;top:425px;width:17px;height:660px;background:#374859;"></div>
<div style="position:absolute;left:761px;top:112px;width:2px;height:1090px;background:#555555;"></div>
<div style="position:absolute;left:2646px;top:112px;width:2px;height:1090px;background:#4a4a4a;"></div>
<div style="position:absolute;left:2620px;top:116px;width:260px;height:44px;background:#2b2b2b;"></div>
<div style="position:absolute;left:832.5px;top:425px;width:2px;height:660px;background:#383838;"></div>
<div style="position:absolute;left:894.5px;top:557px;width:2px;height:88px;background:#383838;"></div>
<div style="position:absolute;left:894.5px;top:733px;width:2px;height:308px;background:#383838;"></div>
<div style="position:absolute;left:1018.5px;top:777px;width:2px;height:132px;background:#383838;"></div>
<div style="position:absolute;left:1147.1999999999998px;top:776px;width:140.4px;height:44px;background:#52503a;"></div>
<div style="position:absolute;left:1131.6px;top:908px;width:31.2px;height:44px;background:#52503a;"></div>
<div style="position:absolute;left:1177.3999999999999px;top:908px;width:32.2px;height:44px;background:#3b514d;"></div>
<div style="position:absolute;top:127.99px;font-family:'Liberation Mono',monospace;font-size:27.0px;line-height:27.0px;color:#606366;white-space:pre;right:2195.50px;-webkit-text-stroke:0.7px;transform:scaleX(0.9300);transform-origin:100% 0;letter-spacing:-0.600px;margin-right:-0.600px;">35</div>
<div style="position:absolute;top:171.99px;font-family:'Liberation Mono',monospace;font-size:27.0px;line-height:27.0px;color:#606366;white-space:pre;right:2195.50px;-webkit-text-stroke:0.7px;transform:scaleX(0.9300);transform-origin:100% 0;letter-spacing:-0.600px;margin-right:-0.600px;">36</div>
<div style="position:absolute;top:215.99px;font-family:'Liberation Mono',monospace;font-size:27.0px;line-height:27.0px;color:#606366;white-space:pre;right:2195.50px;-webkit-text-stroke:0.7px;transform:scaleX(0.9300);transform-origin:100% 0;letter-spacing:-0.600px;margin-right:-0.600px;">37</div>
<div style="position:absolute;top:259.99px;font-family:'Liberation Mono',monospace;font-size:27.0px;line-height:27.0px;color:#606366;white-space:pre;right:2195.50px;-webkit-text-stroke:0.7px;transform:scaleX(0.9300);transform-origin:100% 0;letter-spacing:-0.600px;margin-right:-0.600px;">38</div>
<div style="position:absolute;top:303.99px;font-family:'Liberation Mono',monospace;font-size:27.0px;line-height:27.0px;color:#606366;white-space:pre;right:2195.50px;-webkit-text-stroke:0.7px;transform:scaleX(0.9300);transform-origin:100% 0;letter-spacing:-0.600px;margin-right:-0.600px;">39</div>
<div style="position:absolute;top:347.99px;font-family:'Liberation Mono',monospace;font-size:27.0px;line-height:27.0px;color:#606366;white-space:pre;right:2195.50px;-webkit-text-stroke:0.7px;transform:scaleX(0.9300);transform-origin:100% 0;letter-spacing:-0.600px;margin-right:-0.600px;">40</div>
<div style="position:absolute;top:391.99px;font-family:'Liberation Mono',monospace;font-size:27.0px;line-height:27.0px;color:#606366;white-space:pre;right:2195.50px;-webkit-text-stroke:0.7px;transform:scaleX(0.9300);transform-origin:100% 0;letter-spacing:-0.600px;margin-right:-0.600px;">41</div>
<div style="position:absolute;top:435.99px;font-family:'Liberation Mono',monospace;font-size:27.0px;line-height:27.0px;color:#606366;white-space:pre;right:2195.50px;-webkit-text-stroke:0.7px;transform:scaleX(0.9300);transform-origin:100% 0;letter-spacing:-0.600px;margin-right:-0.600px;">42</div>
<div style="position:absolute;top:479.99px;font-family:'Liberation Mono',monospace;font-size:27.0px;line-height:27.0px;color:#606366;white-space:pre;right:2195.50px;-webkit-text-stroke:0.7px;transform:scaleX(0.9300);transform-origin:100% 0;letter-spacing:-0.600px;margin-right:-0.600px;">43</div>
<div style="position:absolute;top:523.99px;font-family:'Liberation Mono',monospace;font-size:27.0px;line-height:27.0px;color:#606366;white-space:pre;right:2195.50px;-webkit-text-stroke:0.7px;transform:scaleX(0.9300);transform-origin:100% 0;letter-spacing:-0.600px;margin-right:-0.600px;">44</div>
<div style="position:absolute;top:567.99px;font-family:'Liberation Mono',monospace;font-size:27.0px;line-height:27.0px;color:#606366;white-space:pre;right:2195.50px;-webkit-text-stroke:0.7px;transform:scaleX(0.9300);transform-origin:100% 0;letter-spacing:-0.600px;margin-right:-0.600px;">45</div>
<div style="position:absolute;top:611.99px;font-family:'Liberation Mono',monospace;font-size:27.0px;line-height:27.0px;color:#606366;white-space:pre;right:2195.50px;-webkit-text-stroke:0.7px;transform:scaleX(0.9300);transform-origin:100% 0;letter-spacing:-0.600px;margin-right:-0.600px;">46</div>
<div style="position:absolute;top:655.99px;font-family:'Liberation Mono',monospace;font-size:27.0px;line-height:27.0px;color:#606366;white-space:pre;right:2195.50px;-webkit-text-stroke:0.7px;transform:scaleX(0.9300);transform-origin:100% 0;letter-spacing:-0.600px;margin-right:-0.600px;">47</div>
<div style="position:absolute;top:699.99px;font-family:'Liberation Mono',monospace;font-size:27.0px;line-height:27.0px;color:#606366;white-space:pre;right:2195.50px;-webkit-text-stroke:0.7px;transform:scaleX(0.9300);transform-origin:100% 0;letter-spacing:-0.600px;margin-right:-0.600px;">48</div>
<div style="position:absolute;top:743.99px;font-family:'Liberation Mono',monospace;font-size:27.0px;line-height:27.0px;color:#606366;white-space:pre;right:2195.50px;-webkit-text-stroke:0.7px;transform:scaleX(0.9300);transform-origin:100% 0;letter-spacing:-0.600px;margin-right:-0.600px;">49</div>
<div style="position:absolute;top:787.99px;font-family:'Liberation Mono',monospace;font-size:27.0px;line-height:27.0px;color:#606366;white-space:pre;right:2195.50px;-webkit-text-stroke:0.7px;transform:scaleX(0.9300);transform-origin:100% 0;letter-spacing:-0.600px;margin-right:-0.600px;">50</div>
<div style="position:absolute;top:831.99px;font-family:'Liberation Mono',monospace;font-size:27.0px;line-height:27.0px;color:#606366;white-space:pre;right:2195.50px;-webkit-text-stroke:0.7px;transform:scaleX(0.9300);transform-origin:100% 0;letter-spacing:-0.600px;margin-right:-0.600px;">51</div>
<div style="position:absolute;top:875.99px;font-family:'Liberation Mono',monospace;font-size:27.0px;line-height:27.0px;color:#606366;white-space:pre;right:2195.50px;-webkit-text-stroke:0.7px;transform:scaleX(0.9300);transform-origin:100% 0;letter-spacing:-0.600px;margin-right:-0.600px;">52</div>
<div style="position:absolute;top:919.99px;font-family:'Liberation Mono',monospace;font-size:27.0px;line-height:27.0px;color:#a4a3a3;white-space:pre;right:2195.50px;-webkit-text-stroke:0.7px;transform:scaleX(0.9300);transform-origin:100% 0;letter-spacing:-0.600px;margin-right:-0.600px;">53</div>
<div style="position:absolute;top:963.99px;font-family:'Liberation Mono',monospace;font-size:27.0px;line-height:27.0px;color:#606366;white-space:pre;right:2195.50px;-webkit-text-stroke:0.7px;transform:scaleX(0.9300);transform-origin:100% 0;letter-spacing:-0.600px;margin-right:-0.600px;">54</div>
<div style="position:absolute;top:1007.99px;font-family:'Liberation Mono',monospace;font-size:27.0px;line-height:27.0px;color:#606366;white-space:pre;right:2195.50px;-webkit-text-stroke:0.7px;transform:scaleX(0.9300);transform-origin:100% 0;letter-spacing:-0.600px;margin-right:-0.600px;">55</div>
<div style="position:absolute;top:1051.99px;font-family:'Liberation Mono',monospace;font-size:27.0px;line-height:27.0px;color:#606366;white-space:pre;right:2195.50px;-webkit-text-stroke:0.7px;transform:scaleX(0.9300);transform-origin:100% 0;letter-spacing:-0.600px;margin-right:-0.600px;">56</div>
<div style="position:absolute;top:1095.99px;font-family:'Liberation Mono',monospace;font-size:27.0px;line-height:27.0px;color:#606366;white-space:pre;right:2195.50px;-webkit-text-stroke:0.7px;transform:scaleX(0.9300);transform-origin:100% 0;letter-spacing:-0.600px;margin-right:-0.600px;">57</div>
<div style="position:absolute;top:1139.99px;font-family:'Liberation Mono',monospace;font-size:27.0px;line-height:27.0px;color:#606366;white-space:pre;right:2195.50px;-webkit-text-stroke:0.7px;transform:scaleX(0.9300);transform-origin:100% 0;letter-spacing:-0.600px;margin-right:-0.600px;">58</div>
<div style="position:absolute;top:1183.99px;font-family:'Liberation Mono',monospace;font-size:27.0px;line-height:27.0px;color:#606366;white-space:pre;right:2195.50px;-webkit-text-stroke:0.7px;transform:scaleX(0.9300);transform-origin:100% 0;letter-spacing:-0.600px;margin-right:-0.600px;">59</div>
<div style="position:absolute;top:127.99px;font-family:'Liberation Mono',monospace;font-size:27.0px;line-height:27.0px;color:#a9b7c6;white-space:pre;left:773.80px;-webkit-text-stroke:0.7px;letter-spacing:-0.600px;"><span style="color:#629755;font-style:italic;">     <span style="position:relative;top:5px">*</span> For example:</span></div>
<div style="position:absolute;top:171.99px;font-family:'Liberation Mono',monospace;font-size:27.0px;line-height:27.0px;color:#a9b7c6;white-space:pre;left:773.80px;-webkit-text-stroke:0.7px;letter-spacing:-0.600px;"><span style="color:#629755;font-style:italic;">     <span style="position:relative;top:5px">*</span>  splitBySpaces("THE CAT IN THE HAT") returns ["THE", "CAT", "IN", "THE", "HAT"]</span></div>
<div style="position:absolute;top:215.99px;font-family:'Liberation Mono',monospace;font-size:27.0px;line-height:27.0px;color:#a9b7c6;white-space:pre;left:773.80px;-webkit-text-stroke:0.7px;letter-spacing:-0.600px;"><span style="color:#629755;font-style:italic;">     <span style="position:relative;top:5px">*</span></span></div>
<div style="position:absolute;top:259.99px;font-family:'Liberation Mono',monospace;font-size:27.0px;line-height:27.0px;color:#a9b7c6;white-space:pre;left:773.80px;-webkit-text-stroke:0.7px;letter-spacing:-0.600px;"><span style="color:#629755;font-style:italic;">     <span style="position:relative;top:5px">*</span> </span><span style="color:#629755;font-style:italic;font-weight:bold;text-decoration:underline;text-decoration-thickness:2px;text-underline-offset:4px;">@param</span><span style="color:#629755;font-style:italic;"> </span><span style="color:#8a653b;font-style:italic;">s</span><span style="color:#629755;font-style:italic;"> the string to split</span></div>
<div style="position:absolute;top:303.99px;font-family:'Liberation Mono',monospace;font-size:27.0px;line-height:27.0px;color:#a9b7c6;white-space:pre;left:773.80px;-webkit-text-stroke:0.7px;letter-spacing:-0.600px;"><span style="color:#629755;font-style:italic;">     <span style="position:relative;top:5px">*</span> </span><span style="color:#629755;font-style:italic;font-weight:bold;text-decoration:underline;text-decoration-thickness:2px;text-underline-offset:4px;">@return</span><span style="color:#629755;font-style:italic;"> the List of words created</span></div>
<div style="position:absolute;top:347.99px;font-family:'Liberation Mono',monospace;font-size:27.0px;line-height:27.0px;color:#a9b7c6;white-space:pre;left:773.80px;-webkit-text-stroke:0.7px;letter-spacing:-0.600px;"><span style="color:#629755;font-style:italic;">     <span style="position:relative;top:5px">*</span>/</span></div>
<div style="position:absolute;top:391.99px;font-family:'Liberation Mono',monospace;font-size:27.0px;line-height:27.0px;color:#a9b7c6;white-space:pre;left:773.80px;-webkit-text-stroke:0.7px;letter-spacing:-0.600px;"><span style="color:#a9b7c6;">    </span><span style="color:#cc7832;">public static </span><span style="color:#a9b7c6;">List&lt;String&gt; </span><span style="color:#ffc66d;">splitBySpaces</span><span style="color:#a9b7c6;">(String s) {</span></div>
<div style="position:absolute;top:435.99px;font-family:'Liberation Mono',monospace;font-size:27.0px;line-height:27.0px;color:#a9b7c6;white-space:pre;left:773.80px;-webkit-text-stroke:0.7px;letter-spacing:-0.600px;"><span style="color:#a9b7c6;">        List&lt;String&gt; sentence = </span><span style="color:#cc7832;">new </span><span style="color:#a9b7c6;">ArrayList&lt;</span><span style="color:#787878;">String</span><span style="color:#a9b7c6;">&gt;()</span><span style="color:#cc7832;">;</span></div>
<div style="position:absolute;top:479.99px;font-family:'Liberation Mono',monospace;font-size:27.0px;line-height:27.0px;color:#a9b7c6;white-space:pre;left:773.80px;-webkit-text-stroke:0.7px;letter-spacing:-0.600px;"><span style="color:#a9b7c6;">        </span><span style="color:#cc7832;">int </span><span style="color:#a9b7c6;">begIdx = </span><span style="color:#6897bb;">0</span><span style="color:#cc7832;">;</span></div>
<div style="position:absolute;top:523.99px;font-family:'Liberation Mono',monospace;font-size:27.0px;line-height:27.0px;color:#a9b7c6;white-space:pre;left:773.80px;-webkit-text-stroke:0.7px;letter-spacing:-0.600px;"><span style="color:#a9b7c6;">        </span><span style="color:#cc7832;">if </span><span style="color:#a9b7c6;">(s.length() == </span><span style="color:#6897bb;">0</span><span style="color:#a9b7c6;">) {</span></div>
<div style="position:absolute;top:567.99px;font-family:'Liberation Mono',monospace;font-size:27.0px;line-height:27.0px;color:#a9b7c6;white-space:pre;left:773.80px;-webkit-text-stroke:0.7px;letter-spacing:-0.600px;"><span style="color:#a9b7c6;">            sentence.add(</span><span style="color:#6a8759;">""</span><span style="color:#a9b7c6;">)</span><span style="color:#cc7832;">;</span></div>
<div style="position:absolute;top:611.99px;font-family:'Liberation Mono',monospace;font-size:27.0px;line-height:27.0px;color:#a9b7c6;white-space:pre;left:773.80px;-webkit-text-stroke:0.7px;letter-spacing:-0.600px;"><span style="color:#a9b7c6;">            </span><span style="color:#cc7832;">return </span><span style="color:#a9b7c6;">sentence</span><span style="color:#cc7832;">;</span></div>
<div style="position:absolute;top:655.99px;font-family:'Liberation Mono',monospace;font-size:27.0px;line-height:27.0px;color:#a9b7c6;white-space:pre;left:773.80px;-webkit-text-stroke:0.7px;letter-spacing:-0.600px;"><span style="color:#a9b7c6;">        }</span></div>
<div style="position:absolute;top:699.99px;font-family:'Liberation Mono',monospace;font-size:27.0px;line-height:27.0px;color:#a9b7c6;white-space:pre;left:773.80px;-webkit-text-stroke:0.7px;letter-spacing:-0.600px;"><span style="color:#a9b7c6;">        </span><span style="color:#cc7832;">for </span><span style="color:#a9b7c6;">(</span><span style="color:#cc7832;">int </span><span style="color:#a9b7c6;">i = </span><span style="color:#6897bb;">0</span><span style="color:#cc7832;">; </span><span style="color:#a9b7c6;">i &lt; s.length()</span><span style="color:#cc7832;">; </span><span style="color:#a9b7c6;">i++) {</span></div>
<div style="position:absolute;top:743.99px;font-family:'Liberation Mono',monospace;font-size:27.0px;line-height:27.0px;color:#a9b7c6;white-space:pre;left:773.80px;-webkit-text-stroke:0.7px;letter-spacing:-0.600px;"><span style="color:#a9b7c6;">                </span><span style="color:#cc7832;">if </span><span style="color:#a9b7c6;">(s.charAt(i) == </span><span style="color:#6a8759;">' '</span><span style="color:#a9b7c6;">) {</span></div>
<div style="position:absolute;top:787.99px;font-family:'Liberation Mono',monospace;font-size:27.0px;line-height:27.0px;color:#a9b7c6;white-space:pre;left:773.80px;-webkit-text-stroke:0.7px;letter-spacing:-0.600px;"><span style="color:#a9b7c6;">                    </span><span style="color:#cc7832;">int </span><span style="color:#a9b7c6;">substrIdx = i</span><span style="color:#cc7832;">;</span></div>
<div style="position:absolute;top:831.99px;font-family:'Liberation Mono',monospace;font-size:27.0px;line-height:27.0px;color:#a9b7c6;white-space:pre;left:773.80px;-webkit-text-stroke:0.7px;letter-spacing:-0.600px;"><span style="color:#a9b7c6;">                    sentence.add(s.substring(begIdx</span><span style="color:#cc7832;">, </span><span style="color:#a9b7c6;">substrIdx))</span><span style="color:#cc7832;">;</span></div>
<div style="position:absolute;top:875.99px;font-family:'Liberation Mono',monospace;font-size:27.0px;line-height:27.0px;color:#a9b7c6;white-space:pre;left:773.80px;-webkit-text-stroke:0.7px;letter-spacing:-0.600px;"><span style="color:#a9b7c6;">                    begIdx = substrIdx</span><span style="color:#cc7832;">;</span></div>
<div style="position:absolute;top:919.99px;font-family:'Liberation Mono',monospace;font-size:27.0px;line-height:27.0px;color:#a9b7c6;white-space:pre;left:773.80px;-webkit-text-stroke:0.7px;letter-spacing:-0.600px;"><span style="color:#a9b7c6;">                } </span><span style="color:#cc7832;">else if </span><span style="color:#ffef28;font-weight:bold;">()</span><span style="color:#a9b7c6;">{</span></div>
<div style="position:absolute;top:963.99px;font-family:'Liberation Mono',monospace;font-size:27.0px;line-height:27.0px;color:#a9b7c6;white-space:pre;left:773.80px;-webkit-text-stroke:0.7px;letter-spacing:-0.600px;"><span style="color:#a9b7c6;">                }</span></div>
<div style="position:absolute;top:1007.99px;font-family:'Liberation Mono',monospace;font-size:27.0px;line-height:27.0px;color:#a9b7c6;white-space:pre;left:773.80px;-webkit-text-stroke:0.7px;letter-spacing:-0.600px;"><span style="color:#a9b7c6;">            }</span></div>
<div style="position:absolute;top:1051.99px;font-family:'Liberation Mono',monospace;font-size:27.0px;line-height:27.0px;color:#a9b7c6;white-space:pre;left:773.80px;-webkit-text-stroke:0.7px;letter-spacing:-0.600px;"><span style="color:#a9b7c6;">        </span><span style="color:#cc7832;">return </span><span style="color:#a9b7c6;">sentence</span><span style="color:#cc7832;">;</span></div>
<div style="position:absolute;top:1095.99px;font-family:'Liberation Mono',monospace;font-size:27.0px;line-height:27.0px;color:#a9b7c6;white-space:pre;left:773.80px;-webkit-text-stroke:0.7px;letter-spacing:-0.600px;"><span style="color:#a9b7c6;">    }</span></div>
<div style="position:absolute;top:1183.99px;font-family:'Liberation Mono',monospace;font-size:27.0px;line-height:27.0px;color:#a9b7c6;white-space:pre;left:773.80px;-webkit-text-stroke:0.7px;letter-spacing:-0.600px;"><span style="color:#629755;font-style:italic;">    /<span style="position:relative;top:5px">*</span><span style="position:relative;top:5px">*</span></span></div>
<svg style="position:absolute;left:1148.1999999999998px;top:810.7px;" width="93.6" height="5.6" viewBox="0 0 93.6 5.6"><polyline points="0.0,4.6 3.5,1.0 7.0,4.6 10.5,1.0 14.0,4.6 17.5,1.0 21.0,4.6 24.5,1.0 28.0,4.6 31.5,1.0 35.0,4.6 38.5,1.0 42.0,4.6 45.5,1.0 49.0,4.6 52.5,1.0 56.0,4.6 59.5,1.0 63.0,4.6 66.5,1.0 70.0,4.6 73.5,1.0 77.0,4.6 80.5,1.0 84.0,4.6 87.5,1.0 91.0,4.6 93.6,1.0" fill="none" stroke="#4f8a4b" stroke-width="1.4" stroke-linejoin="round"/></svg>
<svg style="position:absolute;left:1193.0px;top:942.7px;" width="17.6" height="5.6" viewBox="0 0 17.6 5.6"><polyline points="0.0,4.6 3.5,1.0 7.0,4.6 10.5,1.0 14.0,4.6 17.5,1.0 17.6,4.6" fill="none" stroke="#bc3f3c" stroke-width="1.4" stroke-linejoin="round"/></svg>
<div style="position:absolute;top:385.95px;font-family:'Liberation Sans',sans-serif;font-size:29px;line-height:29px;color:#c4c4c4;white-space:pre;left:705.50px;-webkit-text-stroke:0.5px;transform:scaleX(0.8152);transform-origin:0 0;">@</div>
<svg style="position:absolute;left:753px;top:345.5px;" width="18" height="23" viewBox="0 0 18 23"><path d="M1,22 V9 L9,1 L17,9 V22 Z" fill="#2e2f31" stroke="#6e6e6e" stroke-width="1.7"/><path d="M5,14.5 H13" stroke="#6e6e6e" stroke-width="1.7"/></svg>
<svg style="position:absolute;left:753px;top:653.5px;" width="18" height="23" viewBox="0 0 18 23"><path d="M1,22 V9 L9,1 L17,9 V22 Z" fill="#2e2f31" stroke="#6e6e6e" stroke-width="1.7"/><path d="M5,14.5 H13" stroke="#6e6e6e" stroke-width="1.7"/></svg>
<svg style="position:absolute;left:753px;top:917.5px;" width="18" height="23" viewBox="0 0 18 23"><path d="M1,22 V9 L9,1 L17,9 V22 Z" fill="#2e2f31" stroke="#6e6e6e" stroke-width="1.7"/><path d="M5,14.5 H13" stroke="#6e6e6e" stroke-width="1.7"/></svg>
<svg style="position:absolute;left:753px;top:1005.5px;" width="18" height="23" viewBox="0 0 18 23"><path d="M1,22 V9 L9,1 L17,9 V22 Z" fill="#2e2f31" stroke="#6e6e6e" stroke-width="1.7"/><path d="M5,14.5 H13" stroke="#6e6e6e" stroke-width="1.7"/></svg>
<svg style="position:absolute;left:753px;top:1093.5px;" width="18" height="23" viewBox="0 0 18 23"><path d="M1,22 V9 L9,1 L17,9 V22 Z" fill="#2e2f31" stroke="#6e6e6e" stroke-width="1.7"/><path d="M5,14.5 H13" stroke="#6e6e6e" stroke-width="1.7"/></svg>
<svg style="position:absolute;left:753px;top:395.5px;" width="18" height="23" viewBox="0 0 18 23"><path d="M1,1 V14 L9,22 L17,14 V1 Z" fill="#2e2f31" stroke="#6e6e6e" stroke-width="1.7"/><path d="M5,8.5 H13" stroke="#6e6e6e" stroke-width="1.7"/></svg>
<svg style="position:absolute;left:753px;top:527.5px;" width="18" height="23" viewBox="0 0 18 23"><path d="M1,1 V14 L9,22 L17,14 V1 Z" fill="#2e2f31" stroke="#6e6e6e" stroke-width="1.7"/><path d="M5,8.5 H13" stroke="#6e6e6e" stroke-width="1.7"/></svg>
<svg style="position:absolute;left:753px;top:703.5px;" width="18" height="23" viewBox="0 0 18 23"><path d="M1,1 V14 L9,22 L17,14 V1 Z" fill="#2e2f31" stroke="#6e6e6e" stroke-width="1.7"/><path d="M5,8.5 H13" stroke="#6e6e6e" stroke-width="1.7"/></svg>
<svg style="position:absolute;left:753px;top:747.5px;" width="18" height="23" viewBox="0 0 18 23"><path d="M1,1 V14 L9,22 L17,14 V1 Z" fill="#2e2f31" stroke="#6e6e6e" stroke-width="1.7"/><path d="M5,8.5 H13" stroke="#6e6e6e" stroke-width="1.7"/></svg>
<svg style="position:absolute;left:753px;top:1187.5px;" width="18" height="23" viewBox="0 0 18 23"><path d="M1,1 V14 L9,22 L17,14 V1 Z" fill="#2e2f31" stroke="#6e6e6e" stroke-width="1.7"/><path d="M5,8.5 H13" stroke="#6e6e6e" stroke-width="1.7"/></svg>
<div style="position:absolute;left:630px;top:1202px;width:2250px;height:2px;background:#323232;"></div>
<svg style="position:absolute;left:2628px;top:128px;" width="21" height="21" viewBox="0 0 21 21"><circle cx="10.2" cy="10.2" r="10.2" fill="#aa2e2e"/><path d="M10.2,4 V11.4" stroke="#2b2b2b" stroke-width="4"/><rect x="8.2" y="13.3" width="4" height="3.700" fill="#2b2b2b"/></svg>
<div style="position:absolute;top:126.18px;font-family:'Liberation Sans',sans-serif;font-size:24px;line-height:24px;color:#bbbbbb;white-space:pre;left:2656.50px;-webkit-text-stroke:0.5px;transform:scaleX(0.9000);transform-origin:0 0;">1</div>
<svg style="position:absolute;left:2682px;top:126px;" width="25" height="23" viewBox="0 0 25 23"><path d="M12,0.5 L24,22 H0 Z" fill="#c99c1d"/><path d="M12,7.5 V14.5" stroke="#2b2b2b" stroke-width="4"/><rect x="10" y="16.200" width="4" height="3.600" fill="#2b2b2b"/></svg>
<div style="position:absolute;top:126.18px;font-family:'Liberation Sans',sans-serif;font-size:24px;line-height:24px;color:#bbbbbb;white-space:pre;left:2712.50px;-webkit-text-stroke:0.5px;transform:scaleX(0.9500);transform-origin:0 0;">7</div>
<svg style="position:absolute;left:2740px;top:127px;" width="25" height="26" viewBox="0 0 25 26"><polyline points="2,10 9,17 22,3" fill="none" stroke="#499c54" stroke-width="4.800"/><polyline points="0.500,24.500 4.500,19.500 9,24.500 13.500,19.500 18,24.500 22.500,19.500" fill="none" stroke="#499c54" stroke-width="1.900"/></svg>
<div style="position:absolute;top:126.18px;font-family:'Liberation Sans',sans-serif;font-size:24px;line-height:24px;color:#bbbbbb;white-space:pre;left:2770.50px;-webkit-text-stroke:0.5px;transform:scaleX(0.9500);transform-origin:0 0;">2</div>
<svg style="position:absolute;left:2805px;top:131px;" width="18" height="12" viewBox="0 0 18 12"><polyline points="1.500,10 9,2.500 16.500,10" fill="none" stroke="#afb1b3" stroke-width="2.800"/></svg>
<svg style="position:absolute;left:2847px;top:133px;" width="18" height="12" viewBox="0 0 18 12"><polyline points="1.500,2 9,9.500 16.500,2" fill="none" stroke="#afb1b3" stroke-width="2.800"/></svg>
<div style="position:absolute;left:2844px;top:344px;width:4px;height:16px;background:#4a78a6;"></div>
<div style="position:absolute;left:2844px;top:390px;width:4px;height:10px;background:#4a78a6;"></div>
<div style="position:absolute;left:2844px;top:486px;width:4px;height:110px;background:#4a78a6;"></div>
<div style="position:absolute;left:2852px;top:486px;width:28px;height:4px;background:#c99c1d;"></div>
<div style="position:absolute;left:2852px;top:548px;width:28px;height:4px;background:#c99c1d;"></div>
<div style="position:absolute;left:2852px;top:690px;width:28px;height:4px;background:#c99c1d;"></div>
<div style="position:absolute;left:2852px;top:800px;width:28px;height:4px;background:#c99c1d;"></div>
<div style="position:absolute;left:2852px;top:893.5px;width:28px;height:4px;background:#c99c1d;"></div>
<div style="position:absolute;left:2852px;top:571.5px;width:28px;height:4px;background:#9e2927;"></div>
<div style="position:absolute;left:2860px;top:434px;width:14px;height:186px;border-radius:7px;background:rgba(128,128,128,0.420)"></div>
<div style="position:absolute;left:42px;top:1204px;width:2838px;height:52px;background:#3b4754;"></div>
<div style="position:absolute;left:42px;top:1256px;width:2838px;height:2px;background:#323232;"></div>
<div style="position:absolute;left:124px;top:1252px;width:208px;height:6px;background:#4a88c7;"></div>
<div style="position:absolute;top:1217.14px;font-family:'Liberation Sans',sans-serif;font-size:27.6px;line-height:27.6px;color:#bbbbbb;white-space:pre;left:55.00px;-webkit-text-stroke:0.5px;transform:scaleX(0.9177);transform-origin:0 0;">Run:</div>
<svg style="position:absolute;left:152px;top:1221px;" width="24" height="20" viewBox="0 0 24 20"><path d="M10.5,0 V20 L0,10 Z" fill="#a0522d"/><path d="M13.5,0 V20 L24,10 Z" fill="#4c8b3a"/></svg>
<div style="position:absolute;top:1217.14px;font-family:'Liberation Sans',sans-serif;font-size:27.6px;line-height:27.6px;color:#bbbbbb;white-space:pre;left:188.50px;-webkit-text-stroke:0.5px;transform:scaleX(0.9889);transform-origin:0 0;">C Tests</div>
<svg style="position:absolute;left:295px;top:1225px;" width="15" height="15" viewBox="0 0 15 15"><path d="M1,1 L14,14 M14,1 L1,14" stroke="#6e7b85" stroke-width="2"/></svg>
<svg style="position:absolute;left:2788px;top:1216px;" width="28" height="28" viewBox="0 0 28 28"><polygon points="11.83,1.18 16.17,1.18 16.61,5.01 20.48,7.24 24.02,5.71 26.18,9.47 23.09,11.77 23.09,16.23 26.18,18.53 24.02,22.29 20.48,20.76 16.61,22.99 16.17,26.82 11.83,26.82 11.39,22.99 7.52,20.76 3.98,22.29 1.82,18.53 4.91,16.23 4.91,11.77 1.82,9.47 3.98,5.71 7.52,7.24 11.39,5.01" fill="#afb1b3" stroke="#afb1b3" stroke-width="1.5" stroke-linejoin="round"/><circle cx="14" cy="14" r="4.68" fill="#3b4754"/></svg>
<div style="position:absolute;left:2842px;top:1228px;width:24px;height:4.2px;background:#afb1b3;"></div>
<div style="position:absolute;left:42px;top:1258px;width:2838px;height:56px;background:#3c3f41;"></div>
<div style="position:absolute;left:100px;top:1314px;width:2724px;height:2px;background:#323232;"></div>
<div style="position:absolute;left:42px;top:1258px;width:56px;height:460px;background:#3c3f41;"></div>
<div style="position:absolute;left:98px;top:1258px;width:2px;height:460px;background:#323232;"></div>
<svg style="position:absolute;left:62px;top:1274px;" width="20" height="24" viewBox="0 0 20 24"><path d="M0,0 L20,12.0 L0,24 Z" fill="#499c54"/></svg>
<svg style="position:absolute;left:62px;top:1324px;" width="24" height="24" viewBox="0 0 24 24"><circle cx="12.3" cy="12" r="12" fill="#c75450"/><path d="M12.1,4 V11.6" stroke="#3c3f41" stroke-width="3.8"/><rect x="10.2" y="16" width="3.8" height="3.700" fill="#3c3f41"/></svg>
<svg style="position:absolute;left:53px;top:1329px;" width="20" height="26" viewBox="0 0 20 26"><path d="M1,0 L19.500,13 L1,26 Z" fill="#3c3f41"/><path d="M3,3 L16.700,13 L3,23 Z" fill="#499c54"/></svg>
<svg style="position:absolute;left:55px;top:1374px;" width="30" height="32" viewBox="0 0 30 32"><path d="M7,9.500 A10,10 0 0 1 25,10.500" fill="none" stroke="#afb1b3" stroke-width="3"/><path d="M4.500,2 L5,11 L13.500,10 Z" fill="#afb1b3"/><path d="M23,22.500 A10,10 0 0 1 5,21.500" fill="none" stroke="#afb1b3" stroke-width="3"/><path d="M25.500,30 L25,21 L16.500,22 Z" fill="#afb1b3"/><rect x="4" y="13" width="6.200" height="6.200" fill="none" stroke="#afb1b3" stroke-width="2.200"/><rect x="20" y="13" width="6.200" height="6.200" fill="none" stroke="#afb1b3" stroke-width="2.200"/></svg>
<svg style="position:absolute;left:56px;top:1428px;" width="30" height="30" viewBox="0 0 30 30"><circle cx="19.5" cy="8.6" r="8.3" fill="#afb1b3"/><path d="M15.5,12.8 L3.2,24.6" stroke="#afb1b3" stroke-width="6.6"/><path d="M20.8,7.4 L30,-1.800" stroke="#3c3f41" stroke-width="5.400"/></svg>
<div style="position:absolute;left:50px;top:1474px;width:40px;height:2px;background:#515355;"></div>
<div style="position:absolute;left:60px;top:1498px;width:20px;height:20px;background:#5a5d5f;"></div>
<svg style="position:absolute;left:56px;top:1547px;" width="29" height="25" viewBox="0 0 29 25"><path d="M0,5 H7 L9,0 H20 L22,5 H29 V25 H0 Z" fill="#5a5d5f"/><circle cx="14.500" cy="14.500" r="6.500" fill="#3c3f41"/><circle cx="14.500" cy="14.500" r="3.500" fill="#5a5d5f"/></svg>
<svg style="position:absolute;left:57px;top:1598px;" width="30" height="30" viewBox="0 0 30 30"><path d="M11,6 c5,0 7,3 7,8 v5 c0,4 -3,7 -7,7 c-4,0 -7,-3 -7,-7 v-5 c0,-5 3,-8 7,-8 z" fill="#5a5d5f"/><path d="M6,1 L9.500,6 M16,1 L12.500,6 M0,11 H4 M18,11 H22 M0,17 H4 M0,23 H4" stroke="#5a5d5f" stroke-width="2.600"/><path d="M6,13 H16 M6,19 H16" stroke="#3c3f41" stroke-width="2.400"/><rect x="13" y="14" width="17" height="16" fill="#3c3f41"/><path d="M16,28 L26,18" stroke="#5a5d5f" stroke-width="3.600"/><path d="M19,16 H29 V26 Z" fill="#5a5d5f"/></svg>
<svg style="position:absolute;left:64px;top:1692px;" width="14" height="11" viewBox="0 0 14 11"><polyline points="1,1 5.500,5.500 1,10" fill="none" stroke="#afb1b3" stroke-width="1.600"/><polyline points="8,1 12.500,5.500 8,10" fill="none" stroke="#afb1b3" stroke-width="1.600"/></svg>
<div style="position:absolute;left:108px;top:1264px;width:44px;height:44px;border-radius:6px;background:#5c6164"></div>
<div style="position:absolute;left:160px;top:1264px;width:44px;height:44px;border-radius:6px;background:#5c6164"></div>
<svg style="position:absolute;left:117px;top:1276px;" width="27" height="21" viewBox="0 0 27 21"><polyline points="2,10 9.500,17.500 25,2.500" fill="none" stroke="#afb1b3" stroke-width="4.400"/></svg>
<svg style="position:absolute;left:169px;top:1273px;" width="26" height="26" viewBox="0 0 26 26"><circle cx="13" cy="13" r="11" fill="none" stroke="#afb1b3" stroke-width="3.200"/><path d="M5.500,20.500 L20.500,5.500" stroke="#afb1b3" stroke-width="3.200"/></svg>
<div style="position:absolute;left:214px;top:1266px;width:2px;height:40px;background:#55534f;"></div>
<svg style="position:absolute;left:234px;top:1274px;" width="16" height="24" viewBox="0 0 16 24"><path d="M8,0 V18" stroke="#afb1b3" stroke-width="3.400"/><path d="M0.500,13 L8,23.500 L15.500,13 Z" fill="#afb1b3"/></svg>
<div style="position:absolute;top:1269.69px;font-family:'Liberation Sans',sans-serif;font-size:17.5px;line-height:17.5px;color:#afb1b3;white-space:pre;left:248.50px;font-weight:bold;-webkit-text-stroke:0.3px;">a</div>
<div style="position:absolute;top:1283.69px;font-family:'Liberation Sans',sans-serif;font-size:17.5px;line-height:17.5px;color:#afb1b3;white-space:pre;left:249.00px;font-weight:bold;-webkit-text-stroke:0.3px;">z</div>
<svg style="position:absolute;left:286px;top:1274px;" width="16" height="24" viewBox="0 0 16 24"><path d="M8,0 V18" stroke="#afb1b3" stroke-width="3.400"/><path d="M0.500,13 L8,23.500 L15.500,13 Z" fill="#afb1b3"/></svg>
<div style="position:absolute;left:304px;top:1276.5px;width:11px;height:3.4px;background:#afb1b3;"></div>
<div style="position:absolute;left:304px;top:1284.5px;width:8px;height:3.4px;background:#afb1b3;"></div>
<div style="position:absolute;left:308px;top:1292.5px;width:6px;height:3.4px;background:#afb1b3;"></div>
<div style="position:absolute;left:332px;top:1266px;width:2px;height:40px;background:#55534f;"></div>
<svg style="position:absolute;left:354px;top:1272px;" width="24" height="29" viewBox="0 0 24 29"><path d="M0,0 H24 V4 H0 Z M0,25 H24 V29 H0 Z M12,6 L19,13 H5 Z M12,23 L19,16 H5 Z" fill="#afb1b3"/></svg>
<svg style="position:absolute;left:406px;top:1273px;" width="24" height="26" viewBox="0 0 24 26"><path d="M0,11 H24 V15 H0 Z M12,8 L19,1 H5 Z M12,18 L19,25 H5 Z" fill="#afb1b3"/></svg>
<div style="position:absolute;left:450px;top:1266px;width:2px;height:40px;background:#55534f;"></div>
<svg style="position:absolute;left:474px;top:1274px;" width="20" height="24" viewBox="0 0 20 24"><path d="M10,24 V4" stroke="#afb1b3" stroke-width="3.400"/><polyline points="1.500,11 10,2.500 18.500,11" fill="none" stroke="#afb1b3" stroke-width="3.400"/></svg>
<svg style="position:absolute;left:526px;top:1274px;" width="20" height="24" viewBox="0 0 20 24"><path d="M10,0 V20" stroke="#afb1b3" stroke-width="3.400"/><polyline points="1.500,13 10,21.500 18.500,13" fill="none" stroke="#afb1b3" stroke-width="3.400"/></svg>
<svg style="position:absolute;left:574px;top:1272px;" width="32" height="32" viewBox="0 0 32 32"><circle cx="14" cy="14" r="11.500" fill="none" stroke="#afb1b3" stroke-width="3"/><path d="M14,7 V14.500 L19,18" fill="none" stroke="#afb1b3" stroke-width="2.800"/><rect x="19" y="24" width="14" height="9" fill="#3c3f41"/><path d="M21,26 H31 L26,31.500 Z" fill="#e6e6e6"/></svg>
<svg style="position:absolute;left:632px;top:1280px;" width="15" height="11" viewBox="0 0 15 11"><polyline points="1,1 5.500,5.500 1,10" fill="none" stroke="#afb1b3" stroke-width="1.600"/><polyline points="8.500,1 13,5.500 8.500,10" fill="none" stroke="#afb1b3" stroke-width="1.600"/></svg>
<svg style="position:absolute;left:664px;top:1270.5px;" width="28" height="28" viewBox="0 0 28 28"><circle cx="14" cy="14" r="13.5" fill="#f4af3d"/><path d="M8.5,8.5 L19.5,19.5 M19.5,8.5 L8.5,19.5" stroke="#231f20" stroke-width="3.2"/></svg>
<div style="position:absolute;top:1270.64px;font-family:'Liberation Sans',sans-serif;font-size:27.6px;line-height:27.6px;color:#e05555;white-space:pre;left:701.00px;-webkit-text-stroke:0.5px;transform:scaleX(1.0130);transform-origin:0 0;">Tests failed: 22</div>
<div style="position:absolute;top:1270.64px;font-family:'Liberation Sans',sans-serif;font-size:27.6px;line-height:27.6px;color:#bbbbbb;white-space:pre;left:887.50px;-webkit-text-stroke:0.5px;transform:scaleX(1.0072);transform-origin:0 0;">, passed: 6</div>
<div style="position:absolute;top:1270.64px;font-family:'Liberation Sans',sans-serif;font-size:27.6px;line-height:27.6px;color:#808080;white-space:pre;left:1023.50px;-webkit-text-stroke:0.5px;transform:scaleX(1.0226);transform-origin:0 0;"> of 28 tests – 256 ms</div>
<div style="position:absolute;left:100px;top:1316px;width:556px;height:400px;overflow:hidden;background:#3c3f41">
<div style="position:absolute;left:0px;top:220px;width:556px;height:40px;background:#0d293e;"></div>
<svg style="position:absolute;left:122px;top:-10px;" width="26" height="20" viewBox="0 0 26 20"><polyline points="2,9.5 9.5,17 24,2.5" fill="none" stroke="#499c54" stroke-width="4.4"/></svg>
<div style="position:absolute;top:-13.36px;font-family:'Liberation Sans',sans-serif;font-size:27.6px;line-height:27.6px;color:#bbbbbb;white-space:pre;left:157.20px;-webkit-text-stroke:0.5px;transform:scaleX(0.9774);transform-origin:0 0;">Test</div>
<div style="position:absolute;top:-13.36px;font-family:'Liberation Sans',sans-serif;font-size:27.6px;line-height:27.6px;color:#bbbbbb;white-space:pre;left:216.40px;-webkit-text-stroke:0.5px;transform:scaleX(1.1731);transform-origin:0 0;">rot([],</div>
<div style="position:absolute;top:-13.36px;font-family:'Liberation Sans',sans-serif;font-size:27.6px;line-height:27.6px;color:#bbbbbb;white-space:pre;left:303.00px;-webkit-text-stroke:0.5px;transform:scaleX(0.6921);transform-origin:0 0;">5)</div>
<div style="position:absolute;top:-13.36px;font-family:'Liberation Sans',sans-serif;font-size:27.6px;line-height:27.6px;color:#808080;white-space:pre;left:515.30px;-webkit-text-stroke:0.5px;transform:scaleX(0.8278);transform-origin:0 0;">ms</div>
<div style="position:absolute;top:-13.36px;font-family:'Liberation Sans',sans-serif;font-size:27.6px;line-height:27.6px;color:#808080;white-space:pre;left:494.28px;-webkit-text-stroke:0.5px;">1</div>
<svg style="position:absolute;left:122px;top:30px;" width="26" height="20" viewBox="0 0 26 20"><polyline points="2,9.5 9.5,17 24,2.5" fill="none" stroke="#499c54" stroke-width="4.4"/></svg>
<div style="position:absolute;top:26.64px;font-family:'Liberation Sans',sans-serif;font-size:27.6px;line-height:27.6px;color:#bbbbbb;white-space:pre;left:157.20px;-webkit-text-stroke:0.5px;transform:scaleX(0.9774);transform-origin:0 0;">Test</div>
<div style="position:absolute;top:26.64px;font-family:'Liberation Sans',sans-serif;font-size:27.6px;line-height:27.6px;color:#bbbbbb;white-space:pre;left:216.40px;-webkit-text-stroke:0.5px;transform:scaleX(1.0291);transform-origin:0 0;">rot(["ABCD"],</div>
<div style="position:absolute;top:26.64px;font-family:'Liberation Sans',sans-serif;font-size:27.6px;line-height:27.6px;color:#bbbbbb;white-space:pre;left:392.80px;-webkit-text-stroke:0.5px;transform:scaleX(0.7572);transform-origin:0 0;">1)</div>
<div style="position:absolute;top:26.64px;font-family:'Liberation Sans',sans-serif;font-size:27.6px;line-height:27.6px;color:#808080;white-space:pre;left:515.30px;-webkit-text-stroke:0.5px;transform:scaleX(0.8278);transform-origin:0 0;">ms</div>
<div style="position:absolute;top:26.64px;font-family:'Liberation Sans',sans-serif;font-size:27.6px;line-height:27.6px;color:#808080;white-space:pre;left:494.28px;-webkit-text-stroke:0.5px;">2</div>
<svg style="position:absolute;left:122px;top:70px;" width="26" height="20" viewBox="0 0 26 20"><polyline points="2,9.5 9.5,17 24,2.5" fill="none" stroke="#499c54" stroke-width="4.4"/></svg>
<div style="position:absolute;top:66.64px;font-family:'Liberation Sans',sans-serif;font-size:27.6px;line-height:27.6px;color:#bbbbbb;white-space:pre;left:157.20px;-webkit-text-stroke:0.5px;transform:scaleX(0.9774);transform-origin:0 0;">Test</div>
<div style="position:absolute;top:66.64px;font-family:'Liberation Sans',sans-serif;font-size:27.6px;line-height:27.6px;color:#bbbbbb;white-space:pre;left:216.40px;-webkit-text-stroke:0.5px;transform:scaleX(0.9984);transform-origin:0 0;">rot(["ABCD",</div>
<div style="position:absolute;top:66.64px;font-family:'Liberation Sans',sans-serif;font-size:27.6px;line-height:27.6px;color:#bbbbbb;white-space:pre;left:381.70px;-webkit-text-stroke:0.5px;">"DDDD"],</div>
<div style="position:absolute;top:66.64px;font-family:'Liberation Sans',sans-serif;font-size:27.6px;line-height:27.6px;color:#bbbbbb;white-space:pre;left:506.70px;-webkit-text-stroke:0.5px;transform:scaleX(0.7857);transform-origin:0 0;">1)</div>
<svg style="position:absolute;left:82px;top:111.5px;" width="22" height="16" viewBox="0 0 22 16"><polyline points="3,4 11,12 19,4" fill="none" stroke="#adadad" stroke-width="2.6"/></svg>
<svg style="position:absolute;left:120px;top:106.5px;" width="28" height="28" viewBox="0 0 28 28"><circle cx="14" cy="14" r="13.5" fill="#c99a3f"/><path d="M8.5,8.5 L19.5,19.5 M19.5,8.5 L8.5,19.5" stroke="#2b2b2b" stroke-width="3.2"/></svg>
<div style="position:absolute;top:106.64px;font-family:'Liberation Sans',sans-serif;font-size:27.6px;line-height:27.6px;color:#bbbbbb;white-space:pre;left:157.20px;-webkit-text-stroke:0.5px;transform:scaleX(0.9774);transform-origin:0 0;">Test</div>
<div style="position:absolute;top:106.64px;font-family:'Liberation Sans',sans-serif;font-size:27.6px;line-height:27.6px;color:#bbbbbb;white-space:pre;left:216.40px;-webkit-text-stroke:0.5px;transform:scaleX(1.0127);transform-origin:0 0;">splitBySpaces(String)</div>
<div style="position:absolute;top:106.64px;font-family:'Liberation Sans',sans-serif;font-size:27.6px;line-height:27.6px;color:#808080;white-space:pre;left:515.30px;-webkit-text-stroke:0.5px;transform:scaleX(0.8278);transform-origin:0 0;">ms</div>
<div style="position:absolute;top:106.64px;font-family:'Liberation Sans',sans-serif;font-size:27.6px;line-height:27.6px;color:#808080;white-space:pre;left:494.28px;-webkit-text-stroke:0.5px;">7</div>
<svg style="position:absolute;left:158px;top:150px;" width="26" height="20" viewBox="0 0 26 20"><polyline points="2,9.5 9.5,17 24,2.5" fill="none" stroke="#499c54" stroke-width="4.4"/></svg>
<div style="position:absolute;top:146.64px;font-family:'Liberation Sans',sans-serif;font-size:27.6px;line-height:27.6px;color:#bbbbbb;white-space:pre;left:195.50px;-webkit-text-stroke:0.5px;transform:scaleX(0.8813);transform-origin:0 0;">[1]</div>
<div style="position:absolute;top:146.64px;font-family:'Liberation Sans',sans-serif;font-size:27.6px;line-height:27.6px;color:#808080;white-space:pre;left:515.30px;-webkit-text-stroke:0.5px;transform:scaleX(0.8278);transform-origin:0 0;">ms</div>
<div style="position:absolute;top:146.64px;font-family:'Liberation Sans',sans-serif;font-size:27.6px;line-height:27.6px;color:#808080;white-space:pre;left:494.28px;-webkit-text-stroke:0.5px;">5</div>
<svg style="position:absolute;left:156px;top:186.5px;" width="28" height="28" viewBox="0 0 28 28"><circle cx="14" cy="14" r="13.5" fill="#c99a3f"/><path d="M8.5,8.5 L19.5,19.5 M19.5,8.5 L8.5,19.5" stroke="#2b2b2b" stroke-width="3.2"/></svg>
<div style="position:absolute;top:186.64px;font-family:'Liberation Sans',sans-serif;font-size:27.6px;line-height:27.6px;color:#bbbbbb;white-space:pre;left:195.50px;-webkit-text-stroke:0.5px;transform:scaleX(0.9956);transform-origin:0 0;">[2]</div>
<div style="position:absolute;top:186.64px;font-family:'Liberation Sans',sans-serif;font-size:27.6px;line-height:27.6px;color:#bbbbbb;white-space:pre;left:237.20px;-webkit-text-stroke:0.5px;transform:scaleX(0.8696);transform-origin:0 0;">HI</div>
<div style="position:absolute;top:186.64px;font-family:'Liberation Sans',sans-serif;font-size:27.6px;line-height:27.6px;color:#808080;white-space:pre;left:515.30px;-webkit-text-stroke:0.5px;transform:scaleX(0.8278);transform-origin:0 0;">ms</div>
<div style="position:absolute;top:186.64px;font-family:'Liberation Sans',sans-serif;font-size:27.6px;line-height:27.6px;color:#808080;white-space:pre;left:494.28px;-webkit-text-stroke:0.5px;">1</div>
<svg style="position:absolute;left:156px;top:226.5px;" width="28" height="28" viewBox="0 0 28 28"><circle cx="14" cy="14" r="13.5" fill="#c99a3f"/><path d="M8.5,8.5 L19.5,19.5 M19.5,8.5 L8.5,19.5" stroke="#2b2b2b" stroke-width="3.2"/></svg>
<div style="position:absolute;top:226.64px;font-family:'Liberation Sans',sans-serif;font-size:27.6px;line-height:27.6px;color:#bbbbbb;white-space:pre;left:195.50px;-webkit-text-stroke:0.5px;transform:scaleX(0.9956);transform-origin:0 0;">[3]</div>
<div style="position:absolute;top:226.64px;font-family:'Liberation Sans',sans-serif;font-size:27.6px;line-height:27.6px;color:#bbbbbb;white-space:pre;left:237.20px;-webkit-text-stroke:0.5px;transform:scaleX(0.8696);transform-origin:0 0;">HI</div>
<div style="position:absolute;top:226.64px;font-family:'Liberation Sans',sans-serif;font-size:27.6px;line-height:27.6px;color:#bbbbbb;white-space:pre;left:271.90px;-webkit-text-stroke:0.5px;transform:scaleX(0.8817);transform-origin:0 0;">THERE</div>
<svg style="position:absolute;left:156px;top:266.5px;" width="28" height="28" viewBox="0 0 28 28"><circle cx="14" cy="14" r="13.5" fill="#c99a3f"/><path d="M8.5,8.5 L19.5,19.5 M19.5,8.5 L8.5,19.5" stroke="#2b2b2b" stroke-width="3.2"/></svg>
<div style="position:absolute;top:266.64px;font-family:'Liberation Sans',sans-serif;font-size:27.6px;line-height:27.6px;color:#bbbbbb;white-space:pre;left:195.50px;-webkit-text-stroke:0.5px;transform:scaleX(0.9956);transform-origin:0 0;">[4]</div>
<div style="position:absolute;top:266.64px;font-family:'Liberation Sans',sans-serif;font-size:27.6px;line-height:27.6px;color:#bbbbbb;white-space:pre;left:237.80px;-webkit-text-stroke:0.5px;transform:scaleX(0.8706);transform-origin:0 0;">A</div>
<div style="position:absolute;top:266.64px;font-family:'Liberation Sans',sans-serif;font-size:27.6px;line-height:27.6px;color:#bbbbbb;white-space:pre;left:263.00px;-webkit-text-stroke:0.5px;transform:scaleX(0.8173);transform-origin:0 0;">B</div>
<div style="position:absolute;top:266.64px;font-family:'Liberation Sans',sans-serif;font-size:27.6px;line-height:27.6px;color:#bbbbbb;white-space:pre;left:287.20px;-webkit-text-stroke:0.5px;transform:scaleX(0.8655);transform-origin:0 0;">C</div>
<div style="position:absolute;top:266.64px;font-family:'Liberation Sans',sans-serif;font-size:27.6px;line-height:27.6px;color:#bbbbbb;white-space:pre;left:314.20px;-webkit-text-stroke:0.5px;transform:scaleX(0.8102);transform-origin:0 0;">D</div>
<div style="position:absolute;top:266.64px;font-family:'Liberation Sans',sans-serif;font-size:27.6px;line-height:27.6px;color:#bbbbbb;white-space:pre;left:340.80px;-webkit-text-stroke:0.5px;transform:scaleX(0.7137);transform-origin:0 0;">E</div>
<div style="position:absolute;top:266.64px;font-family:'Liberation Sans',sans-serif;font-size:27.6px;line-height:27.6px;color:#bbbbbb;white-space:pre;left:364.20px;-webkit-text-stroke:0.5px;transform:scaleX(0.7603);transform-origin:0 0;">F</div>
<div style="position:absolute;top:266.64px;font-family:'Liberation Sans',sans-serif;font-size:27.6px;line-height:27.6px;color:#bbbbbb;white-space:pre;left:386.40px;-webkit-text-stroke:0.5px;transform:scaleX(0.8829);transform-origin:0 0;">GGG</div>
<div style="position:absolute;top:266.64px;font-family:'Liberation Sans',sans-serif;font-size:27.6px;line-height:27.6px;color:#808080;white-space:pre;left:515.30px;-webkit-text-stroke:0.5px;transform:scaleX(0.8278);transform-origin:0 0;">ms</div>
<div style="position:absolute;top:266.64px;font-family:'Liberation Sans',sans-serif;font-size:27.6px;line-height:27.6px;color:#808080;white-space:pre;left:494.28px;-webkit-text-stroke:0.5px;">1</div>
<svg style="position:absolute;left:156px;top:306.5px;" width="28" height="28" viewBox="0 0 28 28"><circle cx="14" cy="14" r="13.5" fill="#c99a3f"/><path d="M8.5,8.5 L19.5,19.5 M19.5,8.5 L8.5,19.5" stroke="#2b2b2b" stroke-width="3.2"/></svg>
<div style="position:absolute;top:306.64px;font-family:'Liberation Sans',sans-serif;font-size:27.6px;line-height:27.6px;color:#bbbbbb;white-space:pre;left:195.50px;-webkit-text-stroke:0.5px;transform:scaleX(0.9956);transform-origin:0 0;">[5]</div>
<div style="position:absolute;top:306.64px;font-family:'Liberation Sans',sans-serif;font-size:27.6px;line-height:27.6px;color:#bbbbbb;white-space:pre;left:237.20px;-webkit-text-stroke:0.5px;transform:scaleX(0.9352);transform-origin:0 0;">TRUTH</div>
<div style="position:absolute;top:306.64px;font-family:'Liberation Sans',sans-serif;font-size:27.6px;line-height:27.6px;color:#bbbbbb;white-space:pre;left:333.90px;-webkit-text-stroke:0.5px;transform:scaleX(0.8397);transform-origin:0 0;">IS</div>
<div style="position:absolute;top:306.64px;font-family:'Liberation Sans',sans-serif;font-size:27.6px;line-height:27.6px;color:#bbbbbb;white-space:pre;left:365.60px;-webkit-text-stroke:0.5px;transform:scaleX(0.9049);transform-origin:0 0;">NOT</div>
<div style="position:absolute;top:306.64px;font-family:'Liberation Sans',sans-serif;font-size:27.6px;line-height:27.6px;color:#bbbbbb;white-space:pre;left:428.00px;-webkit-text-stroke:0.5px;transform:scaleX(0.8761);transform-origin:0 0;">A</div>
<div style="position:absolute;top:306.64px;font-family:'Liberation Sans',sans-serif;font-size:27.6px;line-height:27.6px;color:#bbbbbb;white-space:pre;left:453.30px;-webkit-text-stroke:0.5px;transform:scaleX(0.8735);transform-origin:0 0;">DEMOCRACY</div>
<svg style="position:absolute;left:156px;top:346.5px;" width="28" height="28" viewBox="0 0 28 28"><circle cx="14" cy="14" r="13.5" fill="#c99a3f"/><path d="M8.5,8.5 L19.5,19.5 M19.5,8.5 L8.5,19.5" stroke="#2b2b2b" stroke-width="3.2"/></svg>
<div style="position:absolute;top:346.64px;font-family:'Liberation Sans',sans-serif;font-size:27.6px;line-height:27.6px;color:#bbbbbb;white-space:pre;left:195.50px;-webkit-text-stroke:0.5px;transform:scaleX(0.9956);transform-origin:0 0;">[6]</div>
<div style="position:absolute;top:346.64px;font-family:'Liberation Sans',sans-serif;font-size:27.6px;line-height:27.6px;color:#bbbbbb;white-space:pre;left:237.80px;-webkit-text-stroke:0.5px;transform:scaleX(0.8919);transform-origin:0 0;">WHEN</div>
<div style="position:absolute;top:346.64px;font-family:'Liberation Sans',sans-serif;font-size:27.6px;line-height:27.6px;color:#bbbbbb;white-space:pre;left:324.70px;-webkit-text-stroke:0.5px;transform:scaleX(0.8551);transform-origin:0 0;">IN</div>
<div style="position:absolute;top:346.64px;font-family:'Liberation Sans',sans-serif;font-size:27.6px;line-height:27.6px;color:#bbbbbb;white-space:pre;left:358.60px;-webkit-text-stroke:0.5px;transform:scaleX(0.9203);transform-origin:0 0;">THE</div>
<div style="position:absolute;top:346.64px;font-family:'Liberation Sans',sans-serif;font-size:27.6px;line-height:27.6px;color:#bbbbbb;white-space:pre;left:418.30px;-webkit-text-stroke:0.5px;transform:scaleX(0.8889);transform-origin:0 0;">COURSE</div>
<div style="position:absolute;top:346.64px;font-family:'Liberation Sans',sans-serif;font-size:27.6px;line-height:27.6px;color:#bbbbbb;white-space:pre;left:534.40px;-webkit-text-stroke:0.5px;transform:scaleX(0.7194);transform-origin:0 0;">OF</div>
<svg style="position:absolute;left:85px;top:388.5px;" width="16" height="22" viewBox="0 0 16 22"><polyline points="4,3 12,11 4,19" fill="none" stroke="#adadad" stroke-width="2.6"/></svg>
<svg style="position:absolute;left:120px;top:386.5px;" width="28" height="28" viewBox="0 0 28 28"><circle cx="14" cy="14" r="13.5" fill="#c99a3f"/><path d="M8.5,8.5 L19.5,19.5 M19.5,8.5 L8.5,19.5" stroke="#2b2b2b" stroke-width="3.2"/></svg>
<div style="position:absolute;top:386.64px;font-family:'Liberation Sans',sans-serif;font-size:27.6px;line-height:27.6px;color:#bbbbbb;white-space:pre;left:157.20px;-webkit-text-stroke:0.5px;transform:scaleX(0.9774);transform-origin:0 0;">Test</div>
<div style="position:absolute;top:386.64px;font-family:'Liberation Sans',sans-serif;font-size:27.6px;line-height:27.6px;color:#bbbbbb;white-space:pre;left:216.40px;-webkit-text-stroke:0.5px;transform:scaleX(1.0104);transform-origin:0 0;">putTogetherWithSpac</div>
<div style="position:absolute;left:483.79999999999995px;top:380px;width:80px;height:40px;background:#3c3f41;"></div>
<div style="position:absolute;top:386.64px;font-family:'Liberation Sans',sans-serif;font-size:27.6px;line-height:27.6px;color:#bbbbbb;white-space:pre;left:485.00px;-webkit-text-stroke:0.5px;">:</div>
<div style="position:absolute;top:386.64px;font-family:'Liberation Sans',sans-serif;font-size:27.6px;line-height:27.6px;color:#808080;white-space:pre;left:515.30px;-webkit-text-stroke:0.5px;transform:scaleX(0.8278);transform-origin:0 0;">ms</div>
<div style="position:absolute;top:386.64px;font-family:'Liberation Sans',sans-serif;font-size:27.6px;line-height:27.6px;color:#808080;white-space:pre;left:494.28px;-webkit-text-stroke:0.5px;">2</div>
</div>
<div style="position:absolute;left:656px;top:1316px;width:2168px;height:400px;background:#2b2b2b;"></div>
<div style="position:absolute;left:2824px;top:1314px;width:56px;height:402px;background:#3c3f41;"></div>
<div style="position:absolute;left:2822px;top:1316px;width:2px;height:400px;background:#313335;"></div>
<div style="position:absolute;top:1372.29px;font-family:'Liberation Mono',monospace;font-size:27.0px;line-height:27.0px;color:#ff6b68;white-space:pre;left:684.50px;-webkit-text-stroke:0.7px;letter-spacing:-0.600px;">org.opentest4j.AssertionFailedError: iterable lengths differ, expected: &lt;2&gt; but was: &lt;1&gt;</div>
<div style="position:absolute;top:1460.29px;font-family:'Liberation Mono',monospace;font-size:27.0px;line-height:27.0px;color:#ff6b68;white-space:pre;left:684.50px;-webkit-text-stroke:0.7px;letter-spacing:-0.600px;">    at org.junit.jupiter.api.AssertionUtils.fail(<span style="color:#808080;text-decoration:underline;text-decoration-thickness:2px;text-underline-offset:5px">AssertionUtils.java:39</span>)</div>
<div style="position:absolute;top:1504.29px;font-family:'Liberation Mono',monospace;font-size:27.0px;line-height:27.0px;color:#ff6b68;white-space:pre;left:684.50px;-webkit-text-stroke:0.7px;letter-spacing:-0.600px;">    at org.junit.jupiter.api.AssertIterableEquals.assertIteratorsAreEmpty(<span style="color:#808080;text-decoration:underline;text-decoration-thickness:2px;text-underline-offset:5px">AssertIterableEquals.java:122</span>)</div>
<div style="position:absolute;top:1548.29px;font-family:'Liberation Mono',monospace;font-size:27.0px;line-height:27.0px;color:#ff6b68;white-space:pre;left:684.50px;-webkit-text-stroke:0.7px;letter-spacing:-0.600px;">    at org.junit.jupiter.api.AssertIterableEquals.assertIterableEquals(<span style="color:#808080;text-decoration:underline;text-decoration-thickness:2px;text-underline-offset:5px">AssertIterableEquals.java:76</span>)</div>
<div style="position:absolute;top:1592.29px;font-family:'Liberation Mono',monospace;font-size:27.0px;line-height:27.0px;color:#ff6b68;white-space:pre;left:684.50px;-webkit-text-stroke:0.7px;letter-spacing:-0.600px;">    at org.junit.jupiter.api.AssertIterableEquals.assertIterableEquals(<span style="color:#808080;text-decoration:underline;text-decoration-thickness:2px;text-underline-offset:5px">AssertIterableEquals.java:43</span>)</div>
<div style="position:absolute;top:1636.29px;font-family:'Liberation Mono',monospace;font-size:27.0px;line-height:27.0px;color:#ff6b68;white-space:pre;left:684.50px;-webkit-text-stroke:0.7px;letter-spacing:-0.600px;">    at org.junit.jupiter.api.AssertIterableEquals.assertIterableEquals(<span style="color:#808080;text-decoration:underline;text-decoration-thickness:2px;text-underline-offset:5px">AssertIterableEquals.java:39</span>)</div>
<div style="position:absolute;top:1680.29px;font-family:'Liberation Mono',monospace;font-size:27.0px;line-height:27.0px;color:#ff6b68;white-space:pre;left:684.50px;-webkit-text-stroke:0.7px;letter-spacing:-0.600px;">    at org.junit.jupiter.api.Assertions.assertIterableEquals(<span style="color:#808080;text-decoration:underline;text-decoration-thickness:2px;text-underline-offset:5px">Assertions.java:1487</span>)</div>
<svg style="position:absolute;left:663px;top:1419.0px;" width="18" height="23" viewBox="0 0 18 23"><path d="M1,1 V14 L9,22 L17,14 V1 Z" fill="#2b2b2b" stroke="#5a5a5a" stroke-width="1.7"/><path d="M5,8.5 H13" stroke="#5a5a5a" stroke-width="1.7"/></svg>
<svg style="position:absolute;left:663px;top:1677.5px;" width="18" height="23" viewBox="0 0 18 23"><path d="M1,22 V9 L9,1 L17,9 V22 Z" fill="#2b2b2b" stroke="#5a5a5a" stroke-width="1.7"/><path d="M5,14.5 H13" stroke="#5a5a5a" stroke-width="1.7"/></svg>
<div style="position:absolute;left:2353px;top:1712px;width:312px;height:4px;background:#3f4041;"></div>
<svg style="position:absolute;left:2842px;top:1332px;" width="20" height="24" viewBox="0 0 20 24"><path d="M10,24 V4" stroke="#afb1b3" stroke-width="3.400"/><polyline points="1.500,11 10,2.500 18.500,11" fill="none" stroke="#afb1b3" stroke-width="3.400"/></svg>
<svg style="position:absolute;left:2842px;top:1384px;" width="20" height="24" viewBox="0 0 20 24"><path d="M10,0 V20" stroke="#afb1b3" stroke-width="3.400"/><polyline points="1.500,13 10,21.500 18.500,13" fill="none" stroke="#afb1b3" stroke-width="3.400"/></svg>
<svg style="position:absolute;left:2840px;top:1436px;" width="28" height="28" viewBox="0 0 28 28"><path d="M0,2 H24 M0,12 H19.5 a4.6,4.6 0 0 1 0,9.2 H15 M0,21.4 H6" fill="none" stroke="#afb1b3" stroke-width="4"/><path d="M16.5,15.5 V27.500 L9.500,21.400 Z" fill="#afb1b3"/></svg>
<svg style="position:absolute;left:2840px;top:1486px;" width="26" height="26" viewBox="0 0 26 26"><path d="M0,7.500 H8 M0,15 H8 M0,23.500 H24" stroke="#afb1b3" stroke-width="4"/><path d="M18,0 V12" stroke="#afb1b3" stroke-width="4"/><path d="M10.500,9 L18,18.500 L25.500,9 Z" fill="#afb1b3"/></svg>
<svg style="position:absolute;left:2838px;top:1540px;" width="29" height="26" viewBox="0 0 29 26"><path d="M6,0 H22 V5.500 H6 Z" fill="#afb1b3"/><path d="M2,8 H26 a2,2 0 0 1 2,2 V17.500 H22 V14.500 H6 V17.500 H0 V10 a2,2 0 0 1 2,-2 Z" fill="#afb1b3"/><rect x="7" y="17.500" width="14" height="7" fill="none" stroke="#afb1b3" stroke-width="2.400"/><rect x="24" y="10" width="2" height="2" fill="#3c3f41"/></svg>
<svg style="position:absolute;left:2843px;top:1590px;" width="20" height="27" viewBox="0 0 20 27"><path d="M6,0 H14 V3 H20 V6.500 H0 V3 H6 Z" fill="#afb1b3"/><path d="M1.500,9 H18.500 V27 H1.500 Z" fill="#afb1b3"/></svg>
<div style="position:absolute;left:0px;top:1716px;width:2880px;height:2px;background:#323232;"></div>
<div style="position:absolute;left:0px;top:1718px;width:2880px;height:40px;background:#3c3f41;"></div>
<div style="position:absolute;left:0px;top:1758px;width:2880px;height:2px;background:#4b4d4f;"></div>
<div style="position:absolute;left:0px;top:1760px;width:2880px;height:40px;background:#3c3f41;"></div>
<svg style="position:absolute;left:62px;top:1726px;" width="18" height="26" viewBox="0 0 18 26"><circle cx="4" cy="4" r="3.600" fill="#afb1b3"/><circle cx="4" cy="22" r="3.600" fill="#afb1b3"/><circle cx="14" cy="7" r="3.600" fill="#afb1b3"/><path d="M4,4 V22 M14,7 C14,15 4,12 4,19" fill="none" stroke="#afb1b3" stroke-width="2.800"/></svg>
<div style="position:absolute;top:1727.24px;font-family:'Liberation Sans',sans-serif;font-size:23.7px;line-height:23.7px;color:#bbbbbb;white-space:pre;left:92.00px;-webkit-text-stroke:0.5px;transform:scaleX(0.9576);transform-origin:0 0;">Git</div>
<div style="position:absolute;left:140px;top:1718px;width:110px;height:40px;background:#2b2d2e;"></div>
<svg style="position:absolute;left:164px;top:1729px;" width="17" height="19.5" viewBox="0 0 17 19.5"><path d="M0,0 L17,9.75 L0,19.5 Z" fill="#afb1b3"/></svg>
<div style="position:absolute;top:1727.24px;font-family:'Liberation Sans',sans-serif;font-size:23.7px;line-height:23.7px;color:#ffffff;white-space:pre;left:194.50px;-webkit-text-stroke:0.5px;transform:scaleX(0.8855);transform-origin:0 0;">Run</div>
<svg style="position:absolute;left:274px;top:1730px;" width="21" height="17" viewBox="0 0 21 17"><path d="M0,0 H4 V3.500 H0 Z M0,6.700 H4 V10.200 H0 Z M0,13.400 H4 V17 H0 Z M7,0 H21 V3.500 H7 Z M7,6.700 H21 V10.200 H7 Z M7,13.400 H21 V17 H7 Z" fill="#afb1b3"/></svg>
<div style="position:absolute;top:1727.24px;font-family:'Liberation Sans',sans-serif;font-size:23.7px;line-height:23.7px;color:#bbbbbb;white-space:pre;left:305.00px;-webkit-text-stroke:0.5px;transform:scaleX(0.8893);transform-origin:0 0;">TODO</div>
<svg style="position:absolute;left:408px;top:1727px;" width="22" height="22" viewBox="0 0 22 22"><circle cx="11" cy="11" r="11" fill="#c75450"/><path d="M11,4.500 V12.500" stroke="#3c3f41" stroke-width="3.200"/><rect x="9.400" y="14.500" width="3.200" height="3.200" fill="#3c3f41"/></svg>
<div style="position:absolute;top:1727.24px;font-family:'Liberation Sans',sans-serif;font-size:23.7px;line-height:23.7px;color:#bbbbbb;white-space:pre;left:440.50px;-webkit-text-stroke:0.5px;transform:scaleX(0.9390);transform-origin:0 0;">Problems</div>
<svg style="position:absolute;left:580px;top:1728px;" width="22" height="20" viewBox="0 0 22 20"><rect x="0" y="0" width="22" height="20" fill="#afb1b3"/><polyline points="3.500,4 8.500,9 3.500,14" fill="none" stroke="#3c3f41" stroke-width="2"/><path d="M10,15 H17" stroke="#3c3f41" stroke-width="2"/></svg>
<div style="position:absolute;top:1727.24px;font-family:'Liberation Sans',sans-serif;font-size:23.7px;line-height:23.7px;color:#bbbbbb;white-space:pre;left:613.00px;-webkit-text-stroke:0.5px;transform:scaleX(0.9323);transform-origin:0 0;">Terminal</div>
<svg style="position:absolute;left:738px;top:1726px;" width="26" height="24" viewBox="0 0 26 24"><path d="M1,7.500 L8.500,1 L14,2.500 L11,5 L25,20 L21.500,23.500 L7.500,8.500 L4.500,11.500 Z" fill="#afb1b3"/></svg>
<div style="position:absolute;top:1727.24px;font-family:'Liberation Sans',sans-serif;font-size:23.7px;line-height:23.7px;color:#bbbbbb;white-space:pre;left:772.50px;-webkit-text-stroke:0.5px;transform:scaleX(0.9392);transform-origin:0 0;">Build</div>
<svg style="position:absolute;left:2684px;top:1726px;" width="26" height="26" viewBox="0 0 26 26"><circle cx="13" cy="13" r="13" fill="#f4af3d"/><rect x="13" y="13" width="13" height="13" fill="#f4af3d"/></svg>
<div style="position:absolute;top:1730.57px;font-family:'Liberation Sans',sans-serif;font-size:20px;line-height:20px;color:#231f20;white-space:pre;left:2691.50px;font-weight:bold;-webkit-text-stroke:0.3px;">2</div>
<div style="position:absolute;top:1727.24px;font-family:'Liberation Sans',sans-serif;font-size:23.7px;line-height:23.7px;color:#bbbbbb;white-space:pre;left:2718.50px;-webkit-text-stroke:0.5px;transform:scaleX(0.9369);transform-origin:0 0;">Event Log</div>
<svg style="position:absolute;left:12px;top:1767px;" width="25" height="25" viewBox="0 0 25 25"><rect x="5" y="1" width="19" height="19" fill="none" stroke="#afb1b3" stroke-width="2"/><path d="M1,6 V24 H19" fill="none" stroke="#afb1b3" stroke-width="2"/></svg>
<div style="position:absolute;top:1768.94px;font-family:'Liberation Sans',sans-serif;font-size:23.7px;line-height:23.7px;color:#bbbbbb;white-space:pre;left:62.50px;-webkit-text-stroke:0.5px;transform:scaleX(0.9499);transform-origin:0 0;">Expression expected</div>
<div style="position:absolute;top:1768.94px;font-family:'Liberation Sans',sans-serif;font-size:23.7px;line-height:23.7px;color:#bbbbbb;white-space:pre;left:2382.50px;-webkit-text-stroke:0.5px;transform:scaleX(1.0081);transform-origin:0 0;">5:36</div>
<div style="position:absolute;top:1768.94px;font-family:'Liberation Sans',sans-serif;font-size:23.7px;line-height:23.7px;color:#bbbbbb;white-space:pre;left:2452.00px;-webkit-text-stroke:0.5px;transform:scaleX(0.9039);transform-origin:0 0;">LF</div>
<div style="position:absolute;top:1768.94px;font-family:'Liberation Sans',sans-serif;font-size:23.7px;line-height:23.7px;color:#bbbbbb;white-space:pre;left:2500.50px;-webkit-text-stroke:0.5px;transform:scaleX(0.9681);transform-origin:0 0;">UTF-8</div>
<div style="position:absolute;top:1768.94px;font-family:'Liberation Sans',sans-serif;font-size:23.7px;line-height:23.7px;color:#bbbbbb;white-space:pre;left:2590.00px;-webkit-text-stroke:0.5px;transform:scaleX(0.9646);transform-origin:0 0;">4 spaces</div>
<svg style="position:absolute;left:2710px;top:1766px;" width="20" height="28" viewBox="0 0 20 28"><circle cx="4.500" cy="4.500" r="3.800" fill="#afb1b3"/><circle cx="4.500" cy="23.500" r="3.800" fill="#afb1b3"/><circle cx="15.500" cy="5.500" r="3.800" fill="#afb1b3"/><path d="M4.500,4 V23 M15.500,5.500 C15.500,15 4.500,12 4.500,20" fill="none" stroke="#afb1b3" stroke-width="3"/></svg>
<div style="position:absolute;top:1768.94px;font-family:'Liberation Sans',sans-serif;font-size:23.7px;line-height:23.7px;color:#bbbbbb;white-space:pre;left:2740.50px;-webkit-text-stroke:0.5px;transform:scaleX(0.9595);transform-origin:0 0;">master</div>
<svg style="position:absolute;left:2830px;top:1768px;" width="24" height="22" viewBox="0 0 24 22"><path d="M3,10 V6 a4.500,4.500 0 0 1 9,0 V8" fill="none" stroke="#afb1b3" stroke-width="2.800"/><rect x="8" y="10" width="15" height="12" fill="#afb1b3"/></svg>
</body></html>
